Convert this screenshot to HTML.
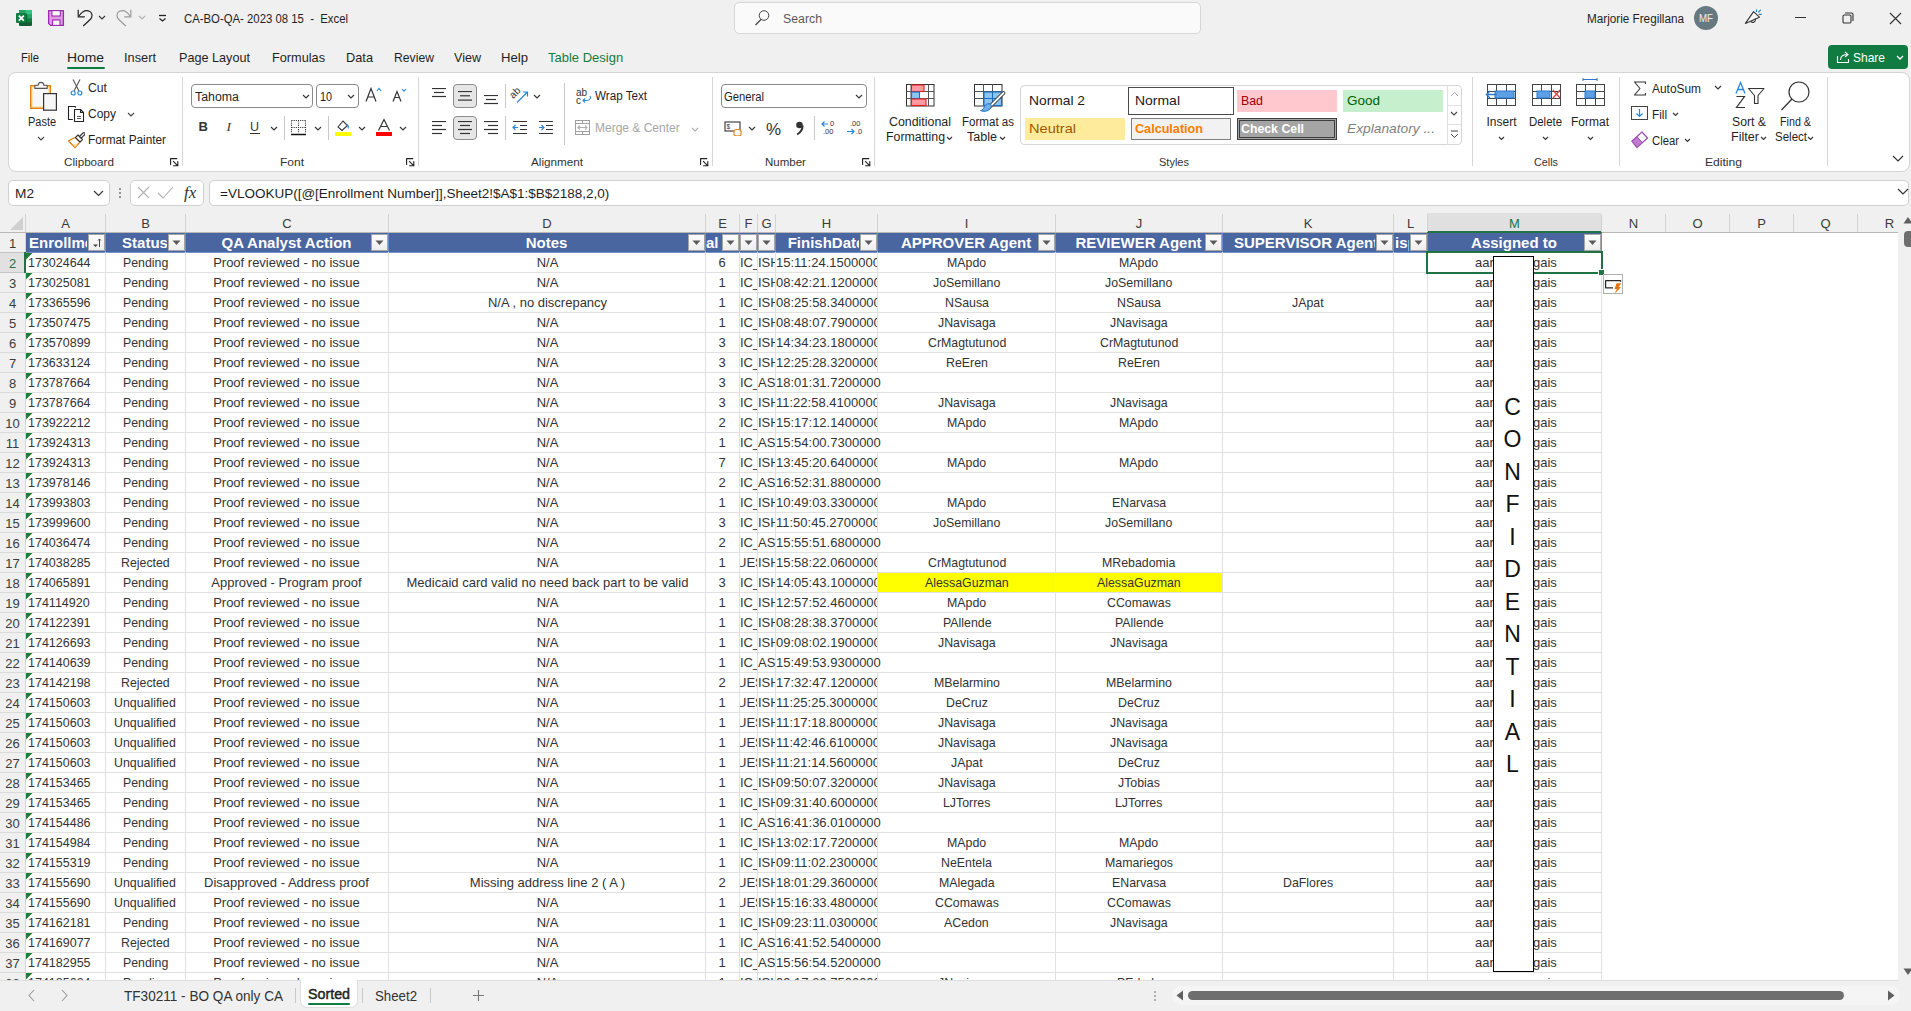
<!DOCTYPE html><html><head><meta charset="utf-8"><style>
html,body{margin:0;padding:0}body{width:1911px;height:1011px;overflow:hidden;position:relative;background:#f0f0f0;font-family:"Liberation Sans",sans-serif}
.t{position:absolute;white-space:pre}.b{position:absolute}
</style></head><body>
<svg class="b" style="left:15px;top:9px;" width="19" height="18" viewBox="0 0 19 18" fill="none"><rect x="4" y="1" width="13" height="16" rx="1" fill="#185c37"/><rect x="4" y="1" width="13" height="12.5" rx="1" fill="#107c41"/><rect x="4" y="1" width="13" height="8.5" rx="1" fill="#21a366"/><rect x="10.5" y="1" width="6.5" height="4.3" rx="0.8" fill="#33c481"/><rect x="1" y="4.1" width="10.6" height="9.8" rx="1" fill="#107c41"/><path d="M11.6 5v9.3H4" stroke="#0b5a2e" stroke-width="0.8" fill="none"/><path d="M3.8 6.6L8.8 11.6M8.8 6.6L3.8 11.6" stroke="#fff" stroke-width="1.7"/></svg>
<svg class="b" style="left:47px;top:9px;" width="18" height="18" viewBox="0 0 18 18" fill="none"><path d="M1.6 1.6H16.4V16.4H3.6L1.6 14.4Z" fill="#dc9de3" stroke="#9c27b0" stroke-width="1.3" stroke-linejoin="round"/><rect x="4.9" y="1.6" width="8.4" height="5.4" fill="#fafafa" stroke="#9c27b0" stroke-width="1.1"/><rect x="5.6" y="11" width="7.4" height="5.4" fill="#fafafa" stroke="#9c27b0" stroke-width="1.1"/></svg>
<svg class="b" style="left:76px;top:9px;" width="18" height="18" viewBox="0 0 18 18" fill="none"><path d="M2.2 0.8V7.9H8.8" stroke="#222" stroke-width="1.2" fill="none"/><path d="M3 7C6 2.5 10 0.8 13.5 2.2 16.6 3.6 16.8 8 14.2 10.5L7.2 17" stroke="#222" stroke-width="1.2" fill="none"/></svg>
<svg class="b" style="left:98px;top:15px;" width="8" height="6" viewBox="0 0 8 6" fill="none"><path d="M1 1 L4.0 4.0 L7 1" stroke="#333" stroke-width="1.1" fill="none"/></svg>
<svg class="b" style="left:116px;top:9px;" width="18" height="18" viewBox="0 0 18 18" fill="none"><path d="M14.8 0.8V7.9H8.2" stroke="#9a9a9a" stroke-width="1.2" fill="none"/><path d="M14 7C11 2.5 7 0.8 3.5 2.2 0.4 3.6 0.2 8 2.8 10.5L9.8 17" stroke="#9a9a9a" stroke-width="1.2" fill="none"/></svg>
<svg class="b" style="left:138px;top:15px;" width="8" height="6" viewBox="0 0 8 6" fill="none"><path d="M1 1 L4.0 4.0 L7 1" stroke="#b0b0b0" stroke-width="1.1" fill="none"/></svg>
<svg class="b" style="left:157px;top:13px;" width="11" height="10" viewBox="0 0 11 10" fill="none"><path d="M2 2.5h7" stroke="#222" stroke-width="1.3"/><path d="M2.5 5.5l3 2.5 3-2.5" stroke="#222" stroke-width="1.2" fill="none"/></svg>
<div class="t" style="left:184.00px;top:10.67px;font-size:12.5px;line-height:16px;color:#1f1f1f;transform:scaleX(0.9080);transform-origin:0 0;">CA-BO-QA- 2023 08 15  -  Excel</div>
<div class="b" style="left:734px;top:2px;width:467px;height:32px;background:#fafafa;border:1px solid #d6d6d6;border-radius:5px;box-sizing:border-box"></div>
<svg class="b" style="left:754px;top:10px;" width="17" height="17" viewBox="0 0 17 17" fill="none"><circle cx="10" cy="5.5" r="4.8" stroke="#444" stroke-width="1"/><path d="M7 9.5L1.5 15" stroke="#444" stroke-width="1.3"/></svg>
<div class="t" style="left:783.00px;top:10.67px;font-size:12.5px;line-height:16px;color:#5a5a5a;transform:scaleX(0.9846);transform-origin:0 0;">Search</div>
<div class="t" style="left:1587.00px;top:10.67px;font-size:12.5px;line-height:16px;color:#1f1f1f;transform:scaleX(0.9371);transform-origin:0 0;">Marjorie Fregillana</div>
<div class="b" style="left:1694px;top:6px;width:24px;height:24px;border-radius:50%;background:#667980"></div>
<div class="t" style="left:1699.00px;top:11.66px;font-size:10.5px;line-height:13px;color:#eeeeee;transform:scaleX(0.9237);transform-origin:0 0;">MF</div>
<svg class="b" style="left:1744px;top:9px;" width="20" height="19" viewBox="0 0 20 19" fill="none"><path d="M1.4 14.4L9.6 2.6 15.4 8.2z" stroke="#333" stroke-width="1.1" fill="#f7f7f7" stroke-linejoin="round"/><path d="M6.8 12.2a2.4 2.4 0 1 0 4.2-2.6" stroke="#333" stroke-width="1.1" fill="none"/><path d="M12.5 0.8v1.6M14.6 3.2l1.9-2.1M15.3 5.4h1.9" stroke="#1a7fd4" stroke-width="1.1" stroke-linecap="round"/></svg>
<div class="b" style="left:1795px;top:17px;width:11px;height:1px;background:#333"></div>
<svg class="b" style="left:1842px;top:12px;" width="12" height="12" viewBox="0 0 12 12" fill="none"><rect x="1" y="3" width="8" height="8" rx="1.2" stroke="#333" stroke-width="1.1" fill="none"/><path d="M3 1h6.5a1.5 1.5 0 0 1 1.5 1.5v6.5" stroke="#333" stroke-width="1.1" fill="none"/></svg>
<svg class="b" style="left:1889px;top:12px;" width="13" height="13" viewBox="0 0 13 13" fill="none"><path d="M1 1l11 11M12 1L1 12" stroke="#333" stroke-width="1.1"/></svg>
<div class="t" style="left:21.00px;top:49.50px;font-size:13px;line-height:16px;color:#1f1f1f;transform:scaleX(0.8591);transform-origin:0 0;">File</div>
<div class="t" style="left:67.00px;top:49.50px;font-size:13px;line-height:16px;color:#1f1f1f;transform:scaleX(1.0667);transform-origin:0 0;">Home</div>
<div class="t" style="left:124.00px;top:49.50px;font-size:13px;line-height:16px;color:#1f1f1f;transform:scaleX(0.9841);transform-origin:0 0;">Insert</div>
<div class="t" style="left:179.00px;top:49.50px;font-size:13px;line-height:16px;color:#1f1f1f;transform:scaleX(0.9722);transform-origin:0 0;">Page Layout</div>
<div class="t" style="left:272.00px;top:49.50px;font-size:13px;line-height:16px;color:#1f1f1f;transform:scaleX(0.9781);transform-origin:0 0;">Formulas</div>
<div class="t" style="left:346.00px;top:49.50px;font-size:13px;line-height:16px;color:#1f1f1f;transform:scaleX(0.9829);transform-origin:0 0;">Data</div>
<div class="t" style="left:394.00px;top:49.50px;font-size:13px;line-height:16px;color:#1f1f1f;transform:scaleX(0.9381);transform-origin:0 0;">Review</div>
<div class="t" style="left:454.00px;top:49.50px;font-size:13px;line-height:16px;color:#1f1f1f;transform:scaleX(0.9659);transform-origin:0 0;">View</div>
<div class="t" style="left:501.00px;top:49.50px;font-size:13px;line-height:16px;color:#1f1f1f;transform:scaleX(1.0093);transform-origin:0 0;">Help</div>
<div class="t" style="left:548.00px;top:49.50px;font-size:13px;line-height:16px;color:#107c41;">Table Design</div>
<div class="b" style="left:67px;top:67px;width:38px;height:2px;background:#107c41;border-radius:1px"></div>
<div class="b" style="left:1828px;top:45px;width:80px;height:24px;background:#107c41;border-radius:4px"></div>
<svg class="b" style="left:1836px;top:50px;" width="15" height="14" viewBox="0 0 15 14" fill="none"><path d="M1.5 6v6.5h11V9" stroke="#fff" stroke-width="1.1" fill="none"/><path d="M4.5 10c0-4 3-5.5 7-5.5M9 2l3 2.5-3 2.5" stroke="#fff" stroke-width="1.1" fill="none"/></svg>
<div class="t" style="left:1852.50px;top:48.82px;font-size:13.5px;line-height:17px;color:#ffffff;transform:scaleX(0.8877);transform-origin:0 0;">Share</div>
<svg class="b" style="left:1895.5px;top:55px;" width="8" height="6" viewBox="0 0 8 6" fill="none"><path d="M1 1 L4.0 4.0 L7 1" stroke="#fff" stroke-width="1.3" fill="none"/></svg>
<div class="b" style="left:8px;top:72px;width:1902px;height:100px;background:#ffffff;border:1px solid #d4d4d4;border-radius:8px;box-sizing:border-box"></div>
<svg class="b" style="left:29px;top:80px;" width="30" height="32" viewBox="0 0 30 32" fill="none"><rect x="1.7" y="5.7" width="19.6" height="22.6" fill="#fbe3a2" stroke="#e07a10" stroke-width="1.3"/><rect x="3.8" y="7.8" width="15.5" height="18.5" fill="#f7f7f7"/><path d="M5.8 8.4V5.2h3.4a2.8 2.8 0 0 1 5.6 0h3.4v3.2z" fill="#f7f7f7" stroke="#555" stroke-width="1.1" stroke-linejoin="round"/><rect x="14.6" y="13.6" width="12.8" height="16.6" fill="#f7f7f7" stroke="#333" stroke-width="1.2"/></svg>
<div class="t" style="left:27.50px;top:115.34px;font-size:12px;line-height:15px;color:#1f1f1f;transform:scaleX(0.9129);transform-origin:0 0;">Paste</div>
<svg class="b" style="left:37px;top:136px;" width="8" height="6" viewBox="0 0 8 6" fill="none"><path d="M1 1 L4.0 4.0 L7 1" stroke="#444" stroke-width="1.1" fill="none"/></svg>
<svg class="b" style="left:70px;top:79px;" width="13" height="18" viewBox="0 0 13 18" fill="none"><path d="M3 0.5l6 11.5M10 0.5L4 12" stroke="#555" stroke-width="1.1"/><circle cx="3.2" cy="14" r="2" stroke="#2b88d8" stroke-width="1.2"/><circle cx="9.8" cy="14" r="2" stroke="#2b88d8" stroke-width="1.2"/></svg>
<div class="t" style="left:88.00px;top:81.34px;font-size:12px;line-height:15px;color:#1f1f1f;transform:scaleX(1.0176);transform-origin:0 0;">Cut</div>
<svg class="b" style="left:67px;top:105px;" width="18" height="18" viewBox="0 0 18 18" fill="none"><path d="M5.8 14.5H1.5V1.5H8L9 2.5" stroke="#222" stroke-width="1.1" fill="none"/><path d="M7.5 4.5H13.5L16.5 7.5V16.5H7.5Z" stroke="#222" stroke-width="1.1" fill="#fff" stroke-linejoin="round"/><path d="M13.5 4.5V7.5H16.5" stroke="#222" stroke-width="1.1" fill="none"/><path d="M10 11.5h4M10 13.5h4" stroke="#444" stroke-width="0.9"/></svg>
<div class="t" style="left:88.00px;top:107.34px;font-size:12px;line-height:15px;color:#1f1f1f;">Copy</div>
<svg class="b" style="left:127px;top:112px;" width="8" height="6" viewBox="0 0 8 6" fill="none"><path d="M1 1 L4.0 4.0 L7 1" stroke="#444" stroke-width="1.1" fill="none"/></svg>
<svg class="b" style="left:67px;top:131px;" width="18" height="18" viewBox="0 0 18 18" fill="none"><path d="M1.5 10C4 8.5 6 7.5 8.5 6.5L13 11L8 16.5Z" fill="#fff" stroke="#e07a10" stroke-width="1.3" stroke-linejoin="round"/><path d="M5.5 13.2L10.8 13.8 8 16.3z" fill="#fbd38a"/><path d="M8.5 6.5l2.5-2.5 4.5 4.5-2.5 2.5z" fill="#fff" stroke="#333" stroke-width="1.1" stroke-linejoin="round"/><path d="M12.5 5.5L16 2a1.2 1.2 0 0 1 1.7 1.7L14.2 7.2z" fill="#fff" stroke="#333" stroke-width="1.1" stroke-linejoin="round"/></svg>
<div class="t" style="left:88.00px;top:133.34px;font-size:12px;line-height:15px;color:#1f1f1f;transform:scaleX(0.9831);transform-origin:0 0;">Format Painter</div>
<div class="t" style="left:63.50px;top:155.02px;font-size:11.5px;line-height:14px;color:#333333;transform:scaleX(1.0159);transform-origin:0 0;">Clipboard</div>
<svg class="b" style="left:170px;top:158px;" width="9" height="9" viewBox="0 0 9 9" fill="none"><path d="M0.6 6.5V0.6H6.8M3.4 3.4L7.6 7.6M7.8 3.5V7.8H3.5" stroke="#222" stroke-width="1.1" fill="none" stroke-linecap="round"/></svg>
<div class="b" style="left:182px;top:77px;width:1px;height:89px;background:#d6d6d6"></div>
<div class="b" style="left:191px;top:84px;width:122px;height:24px;background:#fff;border:1px solid #8a8a8a;border-radius:4px;box-sizing:border-box"></div>
<div class="t" style="left:195.00px;top:88.67px;font-size:12.5px;line-height:16px;color:#1f1f1f;transform:scaleX(0.9895);transform-origin:0 0;">Tahoma</div>
<svg class="b" style="left:302px;top:94px;" width="8" height="6" viewBox="0 0 8 6" fill="none"><path d="M1 1 L4.0 4.0 L7 1" stroke="#333" stroke-width="1.1" fill="none"/></svg>
<div class="b" style="left:316px;top:84px;width:43px;height:24px;background:#fff;border:1px solid #8a8a8a;border-radius:4px;box-sizing:border-box"></div>
<div class="t" style="left:319.50px;top:88.67px;font-size:12.5px;line-height:16px;color:#1f1f1f;transform:scaleX(0.8629);transform-origin:0 0;">10</div>
<svg class="b" style="left:347px;top:94px;" width="8" height="6" viewBox="0 0 8 6" fill="none"><path d="M1 1 L4.0 4.0 L7 1" stroke="#333" stroke-width="1.1" fill="none"/></svg>
<svg class="b" style="left:365px;top:87px;" width="18" height="16" viewBox="0 0 18 16" fill="none"><path d="M1 14.5L6 1.5l5 13M3 10h6" stroke="#333" stroke-width="1.2" fill="none"/><path d="M12 4l2-2.5 2 2.5" stroke="#2b88d8" stroke-width="1.1" fill="none"/></svg>
<svg class="b" style="left:392px;top:87px;" width="18" height="16" viewBox="0 0 18 16" fill="none"><path d="M1 14.5l4-10 4 10M2.7 10.5h4.6" stroke="#333" stroke-width="1.2" fill="none"/><path d="M10 2l2 2.2 2-2.2" stroke="#2b88d8" stroke-width="1.1" fill="none"/></svg>
<div class="t" style="left:198.60px;top:119.00px;font-size:13px;line-height:16px;color:#333;font-weight:bold;">B</div>
<div class="t" style="left:226.62px;top:118.32px;font-size:13.5px;line-height:17px;color:#333;font-style:italic;font-family:'Liberation Serif',serif;">I</div>
<div class="t" style="left:249.98px;top:118.67px;font-size:12.5px;line-height:16px;color:#333;">U</div>
<div class="b" style="left:250px;top:133px;width:10px;height:1px;background:#333"></div>
<svg class="b" style="left:270px;top:126px;" width="8" height="6" viewBox="0 0 8 6" fill="none"><path d="M1 1 L4.0 4.0 L7 1" stroke="#333" stroke-width="1.1" fill="none"/></svg>
<div class="b" style="left:284px;top:116px;width:1px;height:24px;background:#c8c8c8"></div>
<svg class="b" style="left:290px;top:119px;" width="17" height="17" viewBox="0 0 17 17" fill="none"><path d="M1.5 1.5h14M1.5 8.5h14M1.5 1.5v13M8.5 1.5v13M15.5 1.5v13" stroke="#333" stroke-width="1.1" stroke-dasharray="1.1 1.05" fill="none"/><path d="M1 15.5h15" stroke="#111" stroke-width="1.5"/></svg>
<svg class="b" style="left:314px;top:126px;" width="8" height="6" viewBox="0 0 8 6" fill="none"><path d="M1 1 L4.0 4.0 L7 1" stroke="#333" stroke-width="1.1" fill="none"/></svg>
<div class="b" style="left:328px;top:116px;width:1px;height:24px;background:#c8c8c8"></div>
<svg class="b" style="left:334px;top:118px;" width="18" height="19" viewBox="0 0 18 19" fill="none"><path d="M4 9l5-6 4.5 4.5-5.5 5z" stroke="#333" stroke-width="1.1" fill="none"/><path d="M12.5 6.5c1.5 0.5 2.5 2 1.5 4" stroke="#2b88d8" stroke-width="1.2" fill="none"/><rect x="1" y="14" width="16" height="4" fill="#ffff00"/></svg>
<svg class="b" style="left:358px;top:126px;" width="8" height="6" viewBox="0 0 8 6" fill="none"><path d="M1 1 L4.0 4.0 L7 1" stroke="#333" stroke-width="1.1" fill="none"/></svg>
<svg class="b" style="left:375px;top:118px;" width="18" height="19" viewBox="0 0 18 19" fill="none"><path d="M3.5 12.5L9 1.5l5.5 11M5.5 8.5h7" stroke="#333" stroke-width="1.2" fill="none"/><rect x="1" y="14" width="16" height="4" fill="#ff0000"/></svg>
<svg class="b" style="left:399px;top:126px;" width="8" height="6" viewBox="0 0 8 6" fill="none"><path d="M1 1 L4.0 4.0 L7 1" stroke="#333" stroke-width="1.1" fill="none"/></svg>
<div class="t" style="left:279.50px;top:155.02px;font-size:11.5px;line-height:14px;color:#333333;transform:scaleX(1.0435);transform-origin:0 0;">Font</div>
<svg class="b" style="left:406px;top:158px;" width="9" height="9" viewBox="0 0 9 9" fill="none"><path d="M0.6 6.5V0.6H6.8M3.4 3.4L7.6 7.6M7.8 3.5V7.8H3.5" stroke="#222" stroke-width="1.1" fill="none" stroke-linecap="round"/></svg>
<div class="b" style="left:418px;top:77px;width:1px;height:89px;background:#d6d6d6"></div>
<svg class="b" style="left:432px;top:88px;" width="16" height="14" viewBox="0 0 16 14" fill="none"><path d="M0 0.5h14" stroke="#333" stroke-width="1.2"/><path d="M2 4.5h10" stroke="#333" stroke-width="1.2"/><path d="M0 8.5h14" stroke="#333" stroke-width="1.2"/></svg>
<div class="b" style="left:453px;top:84px;width:24px;height:24px;background:#e6e6e6;border:1px solid #8d8d8d;border-radius:4px;box-sizing:border-box"></div>
<svg class="b" style="left:458px;top:91px;" width="16" height="14.899999999999999" viewBox="0 0 16 14.899999999999999" fill="none"><path d="M0 0.5h14" stroke="#333" stroke-width="1.2"/><path d="M2 4.8h10" stroke="#333" stroke-width="1.2"/><path d="M0 9.1h14" stroke="#333" stroke-width="1.2"/></svg>
<svg class="b" style="left:484px;top:95px;" width="16" height="14" viewBox="0 0 16 14" fill="none"><path d="M0 0.5h14" stroke="#333" stroke-width="1.2"/><path d="M2 4.5h10" stroke="#333" stroke-width="1.2"/><path d="M0 8.5h14" stroke="#333" stroke-width="1.2"/></svg>
<div class="b" style="left:505px;top:84px;width:1px;height:24px;background:#c8c8c8"></div>
<svg class="b" style="left:510px;top:85px;" width="20" height="20" viewBox="0 0 20 20" fill="none"><text x="0" y="12" font-size="10" fill="#333" font-family="Liberation Sans" transform="rotate(-45 4 9)">ab</text><path d="M7 17.5L17.5 7M13 7h4.5v4.5" stroke="#2b88d8" stroke-width="1.2" fill="none"/></svg>
<svg class="b" style="left:533px;top:94px;" width="8" height="6" viewBox="0 0 8 6" fill="none"><path d="M1 1 L4.0 4.0 L7 1" stroke="#333" stroke-width="1.1" fill="none"/></svg>
<svg class="b" style="left:432px;top:121px;" width="16" height="18" viewBox="0 0 16 18" fill="none"><path d="M0 0.5h14" stroke="#333" stroke-width="1.2"/><path d="M0 4.5h10" stroke="#333" stroke-width="1.2"/><path d="M0 8.5h14" stroke="#333" stroke-width="1.2"/><path d="M0 12.5h10" stroke="#333" stroke-width="1.2"/></svg>
<div class="b" style="left:453px;top:116px;width:24px;height:24px;background:#e6e6e6;border:1px solid #8d8d8d;border-radius:4px;box-sizing:border-box"></div>
<svg class="b" style="left:458px;top:121px;" width="16" height="18" viewBox="0 0 16 18" fill="none"><path d="M0 0.5h14" stroke="#333" stroke-width="1.2"/><path d="M2 4.5h10" stroke="#333" stroke-width="1.2"/><path d="M0 8.5h14" stroke="#333" stroke-width="1.2"/><path d="M2 12.5h10" stroke="#333" stroke-width="1.2"/></svg>
<svg class="b" style="left:484px;top:121px;" width="16" height="18" viewBox="0 0 16 18" fill="none"><path d="M0 0.5h14" stroke="#333" stroke-width="1.2"/><path d="M4 4.5h10" stroke="#333" stroke-width="1.2"/><path d="M0 8.5h14" stroke="#333" stroke-width="1.2"/><path d="M4 12.5h10" stroke="#333" stroke-width="1.2"/></svg>
<div class="b" style="left:505px;top:116px;width:1px;height:24px;background:#c8c8c8"></div>
<svg class="b" style="left:512px;top:120px;" width="16" height="16" viewBox="0 0 16 16" fill="none"><path d="M1 1.5h14M8 5.5h7M8 9.5h7M1 13.5h14" stroke="#333" stroke-width="1.1"/><path d="M6 7.5H1M3.5 5L1 7.5 3.5 10" stroke="#2b88d8" stroke-width="1.2" fill="none"/></svg>
<svg class="b" style="left:538px;top:120px;" width="16" height="16" viewBox="0 0 16 16" fill="none"><path d="M1 1.5h14M8 5.5h7M8 9.5h7M1 13.5h14" stroke="#333" stroke-width="1.1"/><path d="M1 7.5h5M3.5 5L6 7.5 3.5 10" stroke="#2b88d8" stroke-width="1.2" fill="none"/></svg>
<div class="b" style="left:564px;top:83px;width:1px;height:62px;background:#c8c8c8"></div>
<svg class="b" style="left:576px;top:87px;" width="17" height="17" viewBox="0 0 17 17" fill="none"><text x="0" y="9" font-size="10" fill="#333" font-family="Liberation Sans">ab</text><text x="0" y="17" font-size="10" fill="#333" font-family="Liberation Sans">c</text><path d="M14 9c1.5 2-0.5 4.5-3 4.5H7M9 11.5L7 13.5l2 2" stroke="#2b88d8" stroke-width="1.1" fill="none"/></svg>
<div class="t" style="left:595.00px;top:89.34px;font-size:12px;line-height:15px;color:#1f1f1f;transform:scaleX(0.9708);transform-origin:0 0;">Wrap Text</div>
<svg class="b" style="left:575px;top:120px;" width="16" height="16" viewBox="0 0 16 16" fill="none"><rect x="0.5" y="0.5" width="14" height="14" stroke="#a0a0a0" fill="none"/><path d="M0.5 3.5h14M0.5 11.5h14M7.5 0.5v3M7.5 11.5v3" stroke="#a0a0a0" stroke-width="1"/><path d="M3 7.5h9M5 5.5l-2 2 2 2M10 5.5l2 2-2 2" stroke="#b0b0b0" stroke-width="1.1" fill="none"/></svg>
<div class="t" style="left:595.00px;top:121.34px;font-size:12px;line-height:15px;color:#a6a6a6;">Merge &amp; Center</div>
<svg class="b" style="left:691px;top:127px;" width="8" height="6" viewBox="0 0 8 6" fill="none"><path d="M1 1 L4.0 4.0 L7 1" stroke="#b0b0b0" stroke-width="1.1" fill="none"/></svg>
<div class="t" style="left:531.00px;top:155.02px;font-size:11.5px;line-height:14px;color:#333333;transform:scaleX(1.0171);transform-origin:0 0;">Alignment</div>
<svg class="b" style="left:700px;top:158px;" width="9" height="9" viewBox="0 0 9 9" fill="none"><path d="M0.6 6.5V0.6H6.8M3.4 3.4L7.6 7.6M7.8 3.5V7.8H3.5" stroke="#222" stroke-width="1.1" fill="none" stroke-linecap="round"/></svg>
<div class="b" style="left:712px;top:77px;width:1px;height:89px;background:#d6d6d6"></div>
<div class="b" style="left:721px;top:84px;width:146px;height:24px;background:#fff;border:1px solid #8a8a8a;border-radius:4px;box-sizing:border-box"></div>
<div class="t" style="left:724.00px;top:88.67px;font-size:12.5px;line-height:16px;color:#1f1f1f;transform:scaleX(0.8995);transform-origin:0 0;">General</div>
<svg class="b" style="left:855px;top:94px;" width="8" height="6" viewBox="0 0 8 6" fill="none"><path d="M1 1 L4.0 4.0 L7 1" stroke="#333" stroke-width="1.1" fill="none"/></svg>
<svg class="b" style="left:724px;top:121px;" width="19" height="15" viewBox="0 0 19 15" fill="none"><rect x="1" y="1" width="15" height="9" stroke="#333" stroke-width="1.1" fill="#fff"/><text x="2.5" y="8" font-size="6.5" fill="#333" font-family="Liberation Sans">$</text><ellipse cx="13.5" cy="10" rx="3.5" ry="1.5" fill="#fff" stroke="#e07a10" stroke-width="1.1"/><path d="M10 10v3.5c0 2 7 2 7 0V10" stroke="#e07a10" stroke-width="1.1" fill="#fff"/></svg>
<svg class="b" style="left:748px;top:126px;" width="8" height="6" viewBox="0 0 8 6" fill="none"><path d="M1 1 L4.0 4.0 L7 1" stroke="#333" stroke-width="1.1" fill="none"/></svg>
<div class="t" style="left:765.95px;top:118.61px;font-size:17px;line-height:21px;color:#333;">%</div>
<svg class="b" style="left:794px;top:120px;" width="11" height="17" viewBox="0 0 11 17" fill="none"><circle cx="5.5" cy="5" r="3.3" fill="#333"/><path d="M8.6 5.5c0 4-2 7-5.5 9" stroke="#333" stroke-width="2" fill="none"/></svg>
<div class="b" style="left:814px;top:116px;width:1px;height:24px;background:#c8c8c8"></div>
<svg class="b" style="left:821px;top:119px;" width="17" height="16" viewBox="0 0 17 16" fill="none"><text x="9" y="7" font-size="7.5" fill="#333" font-family="Liberation Sans">0</text><text x="2" y="15" font-size="7.5" fill="#333" font-family="Liberation Sans">.00</text><path d="M7 5H1M3.5 2.5L1 5l2.5 2.5" stroke="#2b88d8" stroke-width="1.2" fill="none"/></svg>
<svg class="b" style="left:846px;top:119px;" width="17" height="16" viewBox="0 0 17 16" fill="none"><text x="4" y="7" font-size="7.5" fill="#333" font-family="Liberation Sans">.00</text><text x="10" y="15" font-size="7.5" fill="#333" font-family="Liberation Sans">.0</text><path d="M1 12.5h7M5.5 10L8 12.5 5.5 15" stroke="#2b88d8" stroke-width="1.2" fill="none"/></svg>
<div class="t" style="left:765.00px;top:155.02px;font-size:11.5px;line-height:14px;color:#333333;">Number</div>
<svg class="b" style="left:862px;top:158px;" width="9" height="9" viewBox="0 0 9 9" fill="none"><path d="M0.6 6.5V0.6H6.8M3.4 3.4L7.6 7.6M7.8 3.5V7.8H3.5" stroke="#222" stroke-width="1.1" fill="none" stroke-linecap="round"/></svg>
<div class="b" style="left:874px;top:77px;width:1px;height:89px;background:#d6d6d6"></div>
<svg class="b" style="left:906px;top:84px;" width="29" height="23" viewBox="0 0 29 23" fill="none"><rect x="0.5" y="0.5" width="27.5" height="21.5" fill="#fff" stroke="#333"/><path d="M0.5 7.5h27.5M0.5 14.5h27.5M22.5 0.5v21.5M5 0.5v21.5" stroke="#555" stroke-width="1"/><rect x="5.5" y="1" width="12.5" height="6.5" fill="#ff9aa2" stroke="#e02020" stroke-width="1.1"/><rect x="5.5" y="8" width="8" height="6.5" fill="#8cc4f0" stroke="#1a6fc4" stroke-width="1.1"/><rect x="5.5" y="15" width="14.5" height="6.5" fill="#ff9aa2" stroke="#e02020" stroke-width="1.1"/></svg>
<div class="t" style="left:889.00px;top:115.34px;font-size:12px;line-height:15px;color:#1f1f1f;transform:scaleX(1.0325);transform-origin:0 0;">Conditional</div>
<div class="t" style="left:885.50px;top:130.34px;font-size:12px;line-height:15px;color:#1f1f1f;transform:scaleX(1.0289);transform-origin:0 0;">Formatting</div>
<svg class="b" style="left:946px;top:136px;" width="7" height="5" viewBox="0 0 7 5" fill="none"><path d="M1 1 L3.5 3.5 L6 1" stroke="#333" stroke-width="1.1" fill="none"/></svg>
<svg class="b" style="left:974px;top:84px;" width="32" height="29" viewBox="0 0 32 29" fill="none"><rect x="0.5" y="0.5" width="27.5" height="21.5" fill="#fff" stroke="#333"/><path d="M0.5 7.5h27.5M0.5 14.5h27.5M9.5 0.5v21.5M18.5 0.5v21.5" stroke="#555" stroke-width="1"/><rect x="10" y="8" width="17.5" height="13.5" fill="#8cc4f0" stroke="#1a6fc4" stroke-width="1.1"/><path d="M10 14.5h17.5M18.5 8v13.5" stroke="#1a6fc4" stroke-width="1"/><path d="M29.5 9L16 22.5" stroke="#333" stroke-width="3.6" stroke-linecap="round"/><path d="M29.5 9L16 22.5" stroke="#fff" stroke-width="1.8" stroke-linecap="round"/><path d="M17 20.5c-3-2-6 0-7 3-0.5 1.5-2 3-3.5 3 3 1.5 7 1 9.5-1.5 1.5-1.5 1.5-3 1-4.5z" fill="#6fb0ea" stroke="#1a6fc4" stroke-width="1"/></svg>
<div class="t" style="left:962.00px;top:115.34px;font-size:12px;line-height:15px;color:#1f1f1f;transform:scaleX(0.9630);transform-origin:0 0;">Format as</div>
<div class="t" style="left:967.00px;top:130.34px;font-size:12px;line-height:15px;color:#1f1f1f;transform:scaleX(1.0458);transform-origin:0 0;">Table</div>
<svg class="b" style="left:999px;top:136px;" width="7" height="5" viewBox="0 0 7 5" fill="none"><path d="M1 1 L3.5 3.5 L6 1" stroke="#333" stroke-width="1.1" fill="none"/></svg>
<div class="b" style="left:1020px;top:85px;width:442px;height:60px;background:#fff;border:1px solid #d6d6d6;border-radius:4px;box-sizing:border-box"></div>
<div class="t" style="left:1029.00px;top:92.50px;font-size:13px;line-height:16px;color:#1a1a1a;transform:scaleX(1.0616);transform-origin:0 0;">Normal 2</div>
<div class="b" style="left:1128px;top:87px;width:106px;height:28px;background:#fff;border:1px solid #4a4a4a;box-sizing:border-box"></div>
<div class="t" style="left:1135.00px;top:92.50px;font-size:13px;line-height:16px;color:#1a1a1a;transform:scaleX(1.0738);transform-origin:0 0;">Normal</div>
<div class="b" style="left:1237px;top:90px;width:100px;height:22px;background:#ffc7ce"></div>
<div class="t" style="left:1241.00px;top:92.50px;font-size:13px;line-height:16px;color:#9c0006;transform:scaleX(0.9507);transform-origin:0 0;">Bad</div>
<div class="b" style="left:1343px;top:90px;width:100px;height:22px;background:#c6efce"></div>
<div class="t" style="left:1347.00px;top:92.50px;font-size:13px;line-height:16px;color:#006100;transform:scaleX(1.0373);transform-origin:0 0;">Good</div>
<div class="b" style="left:1025px;top:118px;width:100px;height:22px;background:#ffeb9c"></div>
<div class="t" style="left:1029.00px;top:120.50px;font-size:13px;line-height:16px;color:#9c5700;transform:scaleX(1.1211);transform-origin:0 0;">Neutral</div>
<div class="b" style="left:1131px;top:118px;width:100px;height:22px;background:#f2f2f2;border:1px solid #7f7f7f;box-sizing:border-box"></div>
<div class="t" style="left:1135.00px;top:120.50px;font-size:13px;line-height:16px;color:#fa7d00;font-weight:bold;transform:scaleX(0.9706);transform-origin:0 0;">Calculation</div>
<div class="b" style="left:1237px;top:118px;width:100px;height:22px;background:#a5a5a5;border:3px double #3f3f3f;box-sizing:border-box"></div>
<div class="t" style="left:1241.00px;top:120.50px;font-size:13px;line-height:16px;color:#ffffff;font-weight:bold;transform:scaleX(0.9476);transform-origin:0 0;">Check Cell</div>
<div class="t" style="left:1347.00px;top:120.50px;font-size:13px;line-height:16px;color:#7f7f7f;font-style:italic;transform:scaleX(1.0588);transform-origin:0 0;">Explanatory ...</div>
<div class="b" style="left:1447px;top:85px;width:1px;height:60px;background:#e0e0e0"></div>
<div class="b" style="left:1448px;top:105px;width:13px;height:1px;background:#e0e0e0"></div>
<div class="b" style="left:1448px;top:124px;width:13px;height:1px;background:#e0e0e0"></div>
<svg class="b" style="left:1450px;top:91px;" width="9" height="6" viewBox="0 0 9 6" fill="none"><path d="M1 5l3.5-3.5L8 5" stroke="#aaa" stroke-width="1" fill="none"/></svg>
<svg class="b" style="left:1450px;top:111px;" width="8" height="6" viewBox="0 0 8 6" fill="none"><path d="M1 1 L4.0 4.0 L7 1" stroke="#444" stroke-width="1.1" fill="none"/></svg>
<svg class="b" style="left:1450px;top:130px;" width="9" height="9" viewBox="0 0 9 9" fill="none"><path d="M1 1h7" stroke="#444" stroke-width="1"/><path d="M1 4l3.5 3.5L8 4" stroke="#444" stroke-width="1" fill="none"/></svg>
<div class="t" style="left:1158.50px;top:155.02px;font-size:11.5px;line-height:14px;color:#333333;transform:scaleX(0.9581);transform-origin:0 0;">Styles</div>
<div class="b" style="left:1472px;top:77px;width:1px;height:89px;background:#d6d6d6"></div>
<svg class="b" style="left:1485px;top:83px;" width="34" height="24" viewBox="0 0 34 24" fill="none"><rect x="2.5" y="1.5" width="28" height="21" stroke="#444" fill="none"/><path d="M11.5 1v22M21.5 1v22M2 8.5h29M2 15.5h29" stroke="#444"/><rect x="10" y="8" width="19" height="7" fill="#5ea0e6" stroke="#2b78c8"/><path d="M12 11.5H1.5M5 8L1.5 11.5 5 15" stroke="#2b78c8" stroke-width="1.4" fill="none"/></svg>
<div class="t" style="left:1486.50px;top:115.34px;font-size:12px;line-height:15px;color:#1f1f1f;">Insert</div>
<svg class="b" style="left:1498px;top:136px;" width="7" height="5" viewBox="0 0 7 5" fill="none"><path d="M1 1 L3.5 3.5 L6 1" stroke="#333" stroke-width="1.1" fill="none"/></svg>
<svg class="b" style="left:1531px;top:83px;" width="34" height="24" viewBox="0 0 34 24" fill="none"><rect x="1.5" y="1.5" width="28" height="21" stroke="#444" fill="none"/><path d="M10.5 1v22M20.5 1v22M1 8.5h29M1 15.5h29" stroke="#444"/><rect x="6" y="8" width="13" height="7" fill="#5ea0e6" stroke="#2b78c8"/><path d="M22 7l7 8M29 7l-7 8" stroke="#e04040" stroke-width="1.3"/></svg>
<div class="t" style="left:1529.00px;top:115.34px;font-size:12px;line-height:15px;color:#1f1f1f;transform:scaleX(0.9514);transform-origin:0 0;">Delete</div>
<svg class="b" style="left:1542px;top:136px;" width="7" height="5" viewBox="0 0 7 5" fill="none"><path d="M1 1 L3.5 3.5 L6 1" stroke="#333" stroke-width="1.1" fill="none"/></svg>
<svg class="b" style="left:1575px;top:78px;" width="31" height="30" viewBox="0 0 31 30" fill="none"><path d="M8 1.5h14M8 0v3M22 0v3" stroke="#2b78c8" stroke-width="1"/><rect x="1.5" y="6.5" width="28" height="21" stroke="#444" fill="none"/><path d="M10.5 6v22M20.5 6v22M1 13.5h29M1 20.5h29" stroke="#444"/><rect x="10" y="13" width="10" height="7" fill="#5ea0e6" stroke="#2b78c8"/></svg>
<div class="t" style="left:1571.00px;top:115.34px;font-size:12px;line-height:15px;color:#1f1f1f;">Format</div>
<svg class="b" style="left:1587px;top:136px;" width="7" height="5" viewBox="0 0 7 5" fill="none"><path d="M1 1 L3.5 3.5 L6 1" stroke="#333" stroke-width="1.1" fill="none"/></svg>
<div class="t" style="left:1534.00px;top:155.02px;font-size:11.5px;line-height:14px;color:#333333;transform:scaleX(0.9383);transform-origin:0 0;">Cells</div>
<div class="b" style="left:1619px;top:77px;width:1px;height:89px;background:#d6d6d6"></div>
<svg class="b" style="left:1633px;top:81px;" width="14" height="15" viewBox="0 0 14 15" fill="none"><path d="M12.5 3V1H1.5l5.5 6.5L1.5 14h11v-2" stroke="#333" stroke-width="1.1" fill="none" stroke-linejoin="round"/></svg>
<div class="t" style="left:1652.00px;top:82.34px;font-size:12px;line-height:15px;color:#1f1f1f;transform:scaleX(0.9930);transform-origin:0 0;">AutoSum</div>
<svg class="b" style="left:1714px;top:85px;" width="8" height="6" viewBox="0 0 8 6" fill="none"><path d="M1 1 L4.0 4.0 L7 1" stroke="#333" stroke-width="1.1" fill="none"/></svg>
<svg class="b" style="left:1631px;top:106px;" width="18" height="15" viewBox="0 0 18 15" fill="none"><rect x="0.5" y="0.5" width="16" height="13" stroke="#444" fill="#fff"/><path d="M8.5 3v7M5.5 7.5l3 3 3-3" stroke="#2b88d8" stroke-width="1.2" fill="none"/></svg>
<div class="t" style="left:1652.00px;top:108.34px;font-size:12px;line-height:15px;color:#1f1f1f;transform:scaleX(0.9776);transform-origin:0 0;">Fill</div>
<svg class="b" style="left:1672px;top:112px;" width="7" height="5" viewBox="0 0 7 5" fill="none"><path d="M1 1 L3.5 3.5 L6 1" stroke="#333" stroke-width="1.1" fill="none"/></svg>
<svg class="b" style="left:1631px;top:131px;" width="18" height="18" viewBox="0 0 18 18" fill="none"><path d="M1 10L6 5.5 11 11.5 6 16z" fill="#c27bd0"/><path d="M11 1L16.5 7 6 16.5 0.8 10.2z" stroke="#9b4fb0" stroke-width="1.2" fill="none" stroke-linejoin="round"/><path d="M6 5.5L11 11.5" stroke="#9b4fb0" stroke-width="1"/></svg>
<div class="t" style="left:1652.00px;top:134.34px;font-size:12px;line-height:15px;color:#1f1f1f;transform:scaleX(0.9412);transform-origin:0 0;">Clear</div>
<svg class="b" style="left:1684px;top:138px;" width="7" height="5" viewBox="0 0 7 5" fill="none"><path d="M1 1 L3.5 3.5 L6 1" stroke="#333" stroke-width="1.1" fill="none"/></svg>
<svg class="b" style="left:1733px;top:81px;" width="33" height="28" viewBox="0 0 33 28" fill="none"><path d="M3 12.5L7.5 1.5 12 12.5M4.6 8.5h5.8" stroke="#2b88d8" stroke-width="1.3" fill="none"/><path d="M3.5 15.5h8l-8 11h8.5" stroke="#333" stroke-width="1.2" fill="none"/><path d="M15.5 7.5h15.5l-6 7v8h-3.5v-8z" stroke="#333" stroke-width="1.1" fill="none" stroke-linejoin="round"/></svg>
<div class="t" style="left:1732.00px;top:115.34px;font-size:12px;line-height:15px;color:#1f1f1f;transform:scaleX(1.0202);transform-origin:0 0;">Sort &amp;</div>
<div class="t" style="left:1731.00px;top:130.34px;font-size:12px;line-height:15px;color:#1f1f1f;transform:scaleX(1.0498);transform-origin:0 0;">Filter</div>
<svg class="b" style="left:1760px;top:136px;" width="7" height="5" viewBox="0 0 7 5" fill="none"><path d="M1 1 L3.5 3.5 L6 1" stroke="#333" stroke-width="1.1" fill="none"/></svg>
<svg class="b" style="left:1780px;top:80px;" width="32" height="32" viewBox="0 0 32 32" fill="none"><circle cx="19" cy="12" r="10" stroke="#333" stroke-width="1.2" fill="none"/><path d="M12 19L1.5 30" stroke="#333" stroke-width="1.3"/></svg>
<div class="t" style="left:1780.00px;top:115.34px;font-size:12px;line-height:15px;color:#1f1f1f;transform:scaleX(0.8941);transform-origin:0 0;">Find &amp;</div>
<div class="t" style="left:1775.00px;top:130.34px;font-size:12px;line-height:15px;color:#1f1f1f;transform:scaleX(0.9597);transform-origin:0 0;">Select</div>
<svg class="b" style="left:1807px;top:136px;" width="7" height="5" viewBox="0 0 7 5" fill="none"><path d="M1 1 L3.5 3.5 L6 1" stroke="#333" stroke-width="1.1" fill="none"/></svg>
<div class="t" style="left:1704.50px;top:155.02px;font-size:11.5px;line-height:14px;color:#333333;transform:scaleX(1.0524);transform-origin:0 0;">Editing</div>
<div class="b" style="left:1827px;top:77px;width:1px;height:89px;background:#d6d6d6"></div>
<svg class="b" style="left:1892px;top:155px;" width="12" height="8" viewBox="0 0 12 8" fill="none"><path d="M1 1 L6.0 6.0 L11 1" stroke="#333" stroke-width="1.2" fill="none"/></svg>
<div class="b" style="left:8px;top:180px;width:102px;height:26px;background:#fff;border:1px solid #d0d0d0;border-radius:5px;box-sizing:border-box"></div>
<div class="t" style="left:15.00px;top:185.50px;font-size:13px;line-height:16px;color:#1f1f1f;transform:scaleX(1.0519);transform-origin:0 0;">M2</div>
<svg class="b" style="left:93px;top:190px;" width="11" height="7" viewBox="0 0 11 7" fill="none"><path d="M1 1 L5.5 5.5 L10 1" stroke="#333" stroke-width="1.1" fill="none"/></svg>
<div class="b" style="left:119px;top:188px;width:2px;height:2px;background:#777;border-radius:1px"></div>
<div class="b" style="left:119px;top:192px;width:2px;height:2px;background:#777;border-radius:1px"></div>
<div class="b" style="left:119px;top:196px;width:2px;height:2px;background:#777;border-radius:1px"></div>
<div class="b" style="left:130px;top:180px;width:74px;height:26px;background:#fff;border:1px solid #d0d0d0;border-radius:5px;box-sizing:border-box"></div>
<svg class="b" style="left:137px;top:186px;" width="13" height="13" viewBox="0 0 13 13" fill="none"><path d="M1 1l11 11M12 1L1 12" stroke="#b0b0b0" stroke-width="1.1"/></svg>
<svg class="b" style="left:157px;top:186px;" width="17" height="13" viewBox="0 0 17 13" fill="none"><path d="M1 7l5 5L16 1" stroke="#b0b0b0" stroke-width="1.1" fill="none"/></svg>
<div class="t" style="left:184.00px;top:182.11px;font-size:17px;line-height:21px;color:#333;font-style:italic;font-family:'Liberation Serif',serif;">fx</div>
<div class="b" style="left:209px;top:180px;width:1700px;height:26px;background:#fff;border:1px solid #d0d0d0;border-radius:5px;box-sizing:border-box"></div>
<div class="t" style="left:220.00px;top:184.82px;font-size:13.5px;line-height:17px;color:#1f1f1f;">=VLOOKUP([@[Enrollment Number]],Sheet2!$A$1:$B$2188,2,0)</div>
<svg class="b" style="left:1897px;top:188px;" width="12" height="8" viewBox="0 0 12 8" fill="none"><path d="M1 1 L6.0 6.0 L11 1" stroke="#333" stroke-width="1.2" fill="none"/></svg>
<div class="b" style="left:25px;top:233px;width:1873px;height:747px;background:#fff"></div>
<div class="b" style="left:0px;top:213px;width:1898px;height:19px;background:#f0f0f0"></div>
<div class="b" style="left:0px;top:233px;width:25px;height:747px;background:#f0f0f0"></div>
<div class="b" style="left:1427px;top:213px;width:174px;height:19px;background:#e0e0e0"></div>
<div class="b" style="left:1427px;top:231px;width:175px;height:2px;background:#217346"></div>
<div class="b" style="left:25px;top:214px;width:1px;height:18px;background:#d4d4d4"></div>
<div class="b" style="left:105px;top:214px;width:1px;height:18px;background:#d4d4d4"></div>
<div class="b" style="left:185px;top:214px;width:1px;height:18px;background:#d4d4d4"></div>
<div class="b" style="left:388px;top:214px;width:1px;height:18px;background:#d4d4d4"></div>
<div class="b" style="left:705px;top:214px;width:1px;height:18px;background:#d4d4d4"></div>
<div class="b" style="left:739px;top:214px;width:1px;height:18px;background:#d4d4d4"></div>
<div class="b" style="left:757px;top:214px;width:1px;height:18px;background:#d4d4d4"></div>
<div class="b" style="left:775px;top:214px;width:1px;height:18px;background:#d4d4d4"></div>
<div class="b" style="left:877px;top:214px;width:1px;height:18px;background:#d4d4d4"></div>
<div class="b" style="left:1055px;top:214px;width:1px;height:18px;background:#d4d4d4"></div>
<div class="b" style="left:1222px;top:214px;width:1px;height:18px;background:#d4d4d4"></div>
<div class="b" style="left:1393px;top:214px;width:1px;height:18px;background:#d4d4d4"></div>
<div class="b" style="left:1427px;top:214px;width:1px;height:18px;background:#d4d4d4"></div>
<div class="b" style="left:1601px;top:214px;width:1px;height:18px;background:#d4d4d4"></div>
<div class="b" style="left:1665px;top:214px;width:1px;height:18px;background:#d4d4d4"></div>
<div class="b" style="left:1729px;top:214px;width:1px;height:18px;background:#d4d4d4"></div>
<div class="b" style="left:1793px;top:214px;width:1px;height:18px;background:#d4d4d4"></div>
<div class="b" style="left:1857px;top:214px;width:1px;height:18px;background:#d4d4d4"></div>
<div class="b" style="left:0px;top:232px;width:1427px;height:1px;background:#b8b8b8"></div>
<div class="b" style="left:1602px;top:232px;width:296px;height:1px;background:#b8b8b8"></div>
<div class="t" style="left:61.16px;top:215.50px;font-size:13px;line-height:16px;color:#3b3b3b;">A</div>
<div class="t" style="left:141.16px;top:215.50px;font-size:13px;line-height:16px;color:#3b3b3b;">B</div>
<div class="t" style="left:282.30px;top:215.50px;font-size:13px;line-height:16px;color:#3b3b3b;">C</div>
<div class="t" style="left:542.30px;top:215.50px;font-size:13px;line-height:16px;color:#3b3b3b;">D</div>
<div class="t" style="left:718.16px;top:215.50px;font-size:13px;line-height:16px;color:#3b3b3b;">E</div>
<div class="t" style="left:744.53px;top:215.50px;font-size:13px;line-height:16px;color:#3b3b3b;">F</div>
<div class="t" style="left:761.45px;top:215.50px;font-size:13px;line-height:16px;color:#3b3b3b;">G</div>
<div class="t" style="left:821.80px;top:215.50px;font-size:13px;line-height:16px;color:#3b3b3b;">H</div>
<div class="t" style="left:964.70px;top:215.50px;font-size:13px;line-height:16px;color:#3b3b3b;">I</div>
<div class="t" style="left:1135.75px;top:215.50px;font-size:13px;line-height:16px;color:#3b3b3b;">J</div>
<div class="t" style="left:1303.66px;top:215.50px;font-size:13px;line-height:16px;color:#3b3b3b;">K</div>
<div class="t" style="left:1406.88px;top:215.50px;font-size:13px;line-height:16px;color:#3b3b3b;">L</div>
<div class="t" style="left:1509.09px;top:215.50px;font-size:13px;line-height:16px;color:#217346;">M</div>
<div class="t" style="left:1628.80px;top:215.50px;font-size:13px;line-height:16px;color:#3b3b3b;">N</div>
<div class="t" style="left:1692.45px;top:215.50px;font-size:13px;line-height:16px;color:#3b3b3b;">O</div>
<div class="t" style="left:1757.16px;top:215.50px;font-size:13px;line-height:16px;color:#3b3b3b;">P</div>
<div class="t" style="left:1820.45px;top:215.50px;font-size:13px;line-height:16px;color:#3b3b3b;">Q</div>
<div class="t" style="left:1884.80px;top:215.50px;font-size:13px;line-height:16px;color:#3b3b3b;">R</div>
<svg class="b" style="left:10px;top:217px;" width="14" height="14" viewBox="0 0 14 14" fill="none"><path d="M13 0 L13 13 L0 13 Z" fill="#d0d0d0"/></svg>
<div class="b" style="left:25px;top:233px;width:1px;height:747px;background:#d4d4d4"></div>
<div class="t" style="left:8.88px;top:235.50px;font-size:13px;line-height:16px;color:#3b3b3b;">1</div>
<div class="b" style="left:0px;top:233px;width:1898px;height:747px;overflow:hidden;">
<div class="b" style="left:26px;top:0px;width:1576px;height:20px;background:#4a66a1"></div>
<div class="b" style="left:26px;top:19px;width:1576px;height:1px;background:#7391cf"></div>
<div class="b" style="left:105px;top:0px;width:1px;height:20px;background:#6a8ad0"></div>
<div class="b" style="left:185px;top:0px;width:1px;height:20px;background:#6a8ad0"></div>
<div class="b" style="left:388px;top:0px;width:1px;height:20px;background:#6a8ad0"></div>
<div class="b" style="left:705px;top:0px;width:1px;height:20px;background:#6a8ad0"></div>
<div class="b" style="left:739px;top:0px;width:1px;height:20px;background:#6a8ad0"></div>
<div class="b" style="left:757px;top:0px;width:1px;height:20px;background:#6a8ad0"></div>
<div class="b" style="left:775px;top:0px;width:1px;height:20px;background:#6a8ad0"></div>
<div class="b" style="left:877px;top:0px;width:1px;height:20px;background:#6a8ad0"></div>
<div class="b" style="left:1055px;top:0px;width:1px;height:20px;background:#6a8ad0"></div>
<div class="b" style="left:1222px;top:0px;width:1px;height:20px;background:#6a8ad0"></div>
<div class="b" style="left:1393px;top:0px;width:1px;height:20px;background:#6a8ad0"></div>
<div class="b" style="left:1427px;top:0px;width:1px;height:20px;background:#6a8ad0"></div>
<div class="b" style="left:1601px;top:0px;width:1px;height:20px;background:#6a8ad0"></div>
<div class="b" style="left:26px;top:39px;width:1575px;height:1px;background:#e1e1e1"></div>
<div class="b" style="left:0px;top:39px;width:25px;height:1px;background:#dadada"></div>
<div class="b" style="left:26px;top:59px;width:1575px;height:1px;background:#e1e1e1"></div>
<div class="b" style="left:0px;top:59px;width:25px;height:1px;background:#dadada"></div>
<div class="b" style="left:26px;top:79px;width:1575px;height:1px;background:#e1e1e1"></div>
<div class="b" style="left:0px;top:79px;width:25px;height:1px;background:#dadada"></div>
<div class="b" style="left:26px;top:99px;width:1575px;height:1px;background:#e1e1e1"></div>
<div class="b" style="left:0px;top:99px;width:25px;height:1px;background:#dadada"></div>
<div class="b" style="left:26px;top:119px;width:1575px;height:1px;background:#e1e1e1"></div>
<div class="b" style="left:0px;top:119px;width:25px;height:1px;background:#dadada"></div>
<div class="b" style="left:26px;top:139px;width:1575px;height:1px;background:#e1e1e1"></div>
<div class="b" style="left:0px;top:139px;width:25px;height:1px;background:#dadada"></div>
<div class="b" style="left:26px;top:159px;width:1575px;height:1px;background:#e1e1e1"></div>
<div class="b" style="left:0px;top:159px;width:25px;height:1px;background:#dadada"></div>
<div class="b" style="left:26px;top:179px;width:1575px;height:1px;background:#e1e1e1"></div>
<div class="b" style="left:0px;top:179px;width:25px;height:1px;background:#dadada"></div>
<div class="b" style="left:26px;top:199px;width:1575px;height:1px;background:#e1e1e1"></div>
<div class="b" style="left:0px;top:199px;width:25px;height:1px;background:#dadada"></div>
<div class="b" style="left:26px;top:219px;width:1575px;height:1px;background:#e1e1e1"></div>
<div class="b" style="left:0px;top:219px;width:25px;height:1px;background:#dadada"></div>
<div class="b" style="left:26px;top:239px;width:1575px;height:1px;background:#e1e1e1"></div>
<div class="b" style="left:0px;top:239px;width:25px;height:1px;background:#dadada"></div>
<div class="b" style="left:26px;top:259px;width:1575px;height:1px;background:#e1e1e1"></div>
<div class="b" style="left:0px;top:259px;width:25px;height:1px;background:#dadada"></div>
<div class="b" style="left:26px;top:279px;width:1575px;height:1px;background:#e1e1e1"></div>
<div class="b" style="left:0px;top:279px;width:25px;height:1px;background:#dadada"></div>
<div class="b" style="left:26px;top:299px;width:1575px;height:1px;background:#e1e1e1"></div>
<div class="b" style="left:0px;top:299px;width:25px;height:1px;background:#dadada"></div>
<div class="b" style="left:26px;top:319px;width:1575px;height:1px;background:#e1e1e1"></div>
<div class="b" style="left:0px;top:319px;width:25px;height:1px;background:#dadada"></div>
<div class="b" style="left:26px;top:339px;width:1575px;height:1px;background:#e1e1e1"></div>
<div class="b" style="left:0px;top:339px;width:25px;height:1px;background:#dadada"></div>
<div class="b" style="left:878px;top:340px;width:177px;height:19px;background:#ffff00"></div>
<div class="b" style="left:1056px;top:340px;width:166px;height:19px;background:#ffff00"></div>
<div class="b" style="left:26px;top:359px;width:1575px;height:1px;background:#e1e1e1"></div>
<div class="b" style="left:0px;top:359px;width:25px;height:1px;background:#dadada"></div>
<div class="b" style="left:26px;top:379px;width:1575px;height:1px;background:#e1e1e1"></div>
<div class="b" style="left:0px;top:379px;width:25px;height:1px;background:#dadada"></div>
<div class="b" style="left:26px;top:399px;width:1575px;height:1px;background:#e1e1e1"></div>
<div class="b" style="left:0px;top:399px;width:25px;height:1px;background:#dadada"></div>
<div class="b" style="left:26px;top:419px;width:1575px;height:1px;background:#e1e1e1"></div>
<div class="b" style="left:0px;top:419px;width:25px;height:1px;background:#dadada"></div>
<div class="b" style="left:26px;top:439px;width:1575px;height:1px;background:#e1e1e1"></div>
<div class="b" style="left:0px;top:439px;width:25px;height:1px;background:#dadada"></div>
<div class="b" style="left:26px;top:459px;width:1575px;height:1px;background:#e1e1e1"></div>
<div class="b" style="left:0px;top:459px;width:25px;height:1px;background:#dadada"></div>
<div class="b" style="left:26px;top:479px;width:1575px;height:1px;background:#e1e1e1"></div>
<div class="b" style="left:0px;top:479px;width:25px;height:1px;background:#dadada"></div>
<div class="b" style="left:26px;top:499px;width:1575px;height:1px;background:#e1e1e1"></div>
<div class="b" style="left:0px;top:499px;width:25px;height:1px;background:#dadada"></div>
<div class="b" style="left:26px;top:519px;width:1575px;height:1px;background:#e1e1e1"></div>
<div class="b" style="left:0px;top:519px;width:25px;height:1px;background:#dadada"></div>
<div class="b" style="left:26px;top:539px;width:1575px;height:1px;background:#e1e1e1"></div>
<div class="b" style="left:0px;top:539px;width:25px;height:1px;background:#dadada"></div>
<div class="b" style="left:26px;top:559px;width:1575px;height:1px;background:#e1e1e1"></div>
<div class="b" style="left:0px;top:559px;width:25px;height:1px;background:#dadada"></div>
<div class="b" style="left:26px;top:579px;width:1575px;height:1px;background:#e1e1e1"></div>
<div class="b" style="left:0px;top:579px;width:25px;height:1px;background:#dadada"></div>
<div class="b" style="left:26px;top:599px;width:1575px;height:1px;background:#e1e1e1"></div>
<div class="b" style="left:0px;top:599px;width:25px;height:1px;background:#dadada"></div>
<div class="b" style="left:26px;top:619px;width:1575px;height:1px;background:#e1e1e1"></div>
<div class="b" style="left:0px;top:619px;width:25px;height:1px;background:#dadada"></div>
<div class="b" style="left:26px;top:639px;width:1575px;height:1px;background:#e1e1e1"></div>
<div class="b" style="left:0px;top:639px;width:25px;height:1px;background:#dadada"></div>
<div class="b" style="left:26px;top:659px;width:1575px;height:1px;background:#e1e1e1"></div>
<div class="b" style="left:0px;top:659px;width:25px;height:1px;background:#dadada"></div>
<div class="b" style="left:26px;top:679px;width:1575px;height:1px;background:#e1e1e1"></div>
<div class="b" style="left:0px;top:679px;width:25px;height:1px;background:#dadada"></div>
<div class="b" style="left:26px;top:699px;width:1575px;height:1px;background:#e1e1e1"></div>
<div class="b" style="left:0px;top:699px;width:25px;height:1px;background:#dadada"></div>
<div class="b" style="left:26px;top:719px;width:1575px;height:1px;background:#e1e1e1"></div>
<div class="b" style="left:0px;top:719px;width:25px;height:1px;background:#dadada"></div>
<div class="b" style="left:26px;top:739px;width:1575px;height:1px;background:#e1e1e1"></div>
<div class="b" style="left:0px;top:739px;width:25px;height:1px;background:#dadada"></div>
<div class="b" style="left:26px;top:759px;width:1575px;height:1px;background:#e1e1e1"></div>
<div class="b" style="left:0px;top:759px;width:25px;height:1px;background:#dadada"></div>
<div class="b" style="left:105px;top:19px;width:1px;height:747px;background:#e1e1e1"></div>
<div class="b" style="left:185px;top:19px;width:1px;height:747px;background:#e1e1e1"></div>
<div class="b" style="left:388px;top:19px;width:1px;height:747px;background:#e1e1e1"></div>
<div class="b" style="left:705px;top:19px;width:1px;height:747px;background:#e1e1e1"></div>
<div class="b" style="left:739px;top:19px;width:1px;height:747px;background:#e1e1e1"></div>
<div class="b" style="left:757px;top:19px;width:1px;height:747px;background:#e1e1e1"></div>
<div class="b" style="left:775px;top:19px;width:1px;height:747px;background:#e1e1e1"></div>
<div class="b" style="left:877px;top:19px;width:1px;height:747px;background:#e1e1e1"></div>
<div class="b" style="left:1055px;top:19px;width:1px;height:747px;background:#e1e1e1"></div>
<div class="b" style="left:1222px;top:19px;width:1px;height:747px;background:#e1e1e1"></div>
<div class="b" style="left:1393px;top:19px;width:1px;height:747px;background:#e1e1e1"></div>
<div class="b" style="left:1427px;top:19px;width:1px;height:747px;background:#e1e1e1"></div>
<div class="b" style="left:1601px;top:19px;width:1px;height:747px;background:#e1e1e1"></div>
<div class="b" style="left:0px;top:19px;width:25px;height:21px;background:#e1e1e1"></div>
<div class="b" style="left:0px;top:19px;width:25px;height:1px;background:#c4c4c4"></div>
<div class="b" style="left:0px;top:39px;width:25px;height:1px;background:#c4c4c4"></div>
<div class="b" style="left:24px;top:19px;width:2px;height:21px;background:#217346"></div>
</div>
<div class="b" style="left:0px;top:233px;width:1898px;height:747px;overflow:hidden;">
<div class="t" style="left:8.88px;top:23.00px;font-size:13px;line-height:16px;color:#217346;">2</div>
<div class="t" style="left:28.00px;top:21.67px;font-size:12.5px;line-height:16px;color:#333333;">173024644</div>
<div class="t" style="left:122.63px;top:21.50px;font-size:13px;line-height:16px;color:#333333;transform:scaleX(0.9500);transform-origin:0 0;">Pending</div>
<div class="t" style="left:213.14px;top:21.50px;font-size:13px;line-height:16px;color:#333333;">Proof reviewed - no issue</div>
<div class="t" style="left:536.66px;top:21.50px;font-size:13px;line-height:16px;color:#333333;">N/A</div>
<div class="t" style="left:718.38px;top:21.50px;font-size:13px;line-height:16px;color:#333333;">6</div>
<div class="b" style="left:740px;top:20px;width:17px;height:19px;overflow:hidden">
<div class="t" style="left:0.00px;top:1.50px;font-size:13px;line-height:16px;color:#333333;">IC_</div>
</div>
<div class="b" style="left:758px;top:20px;width:17px;height:19px;overflow:hidden">
<div class="t" style="left:0.00px;top:1.50px;font-size:13px;line-height:16px;color:#333333;">ISH</div>
</div>
<div class="b" style="left:775px;top:20px;width:102px;height:19px;overflow:hidden">
<div class="t" style="left:1.00px;top:1.50px;font-size:13px;line-height:16px;color:#333333;">15:11:24.1500000</div>
</div>
<div class="t" style="left:947.23px;top:21.50px;font-size:13px;line-height:16px;color:#333333;transform:scaleX(0.9500);transform-origin:0 0;">MApdo</div>
<div class="t" style="left:1119.43px;top:21.50px;font-size:13px;line-height:16px;color:#333333;transform:scaleX(0.9500);transform-origin:0 0;">MApdo</div>
<div class="t" style="left:1475.00px;top:21.50px;font-size:13px;line-height:16px;color:#333333;">aar</div>
<div class="t" style="left:1533.00px;top:21.50px;font-size:13px;line-height:16px;color:#333333;">gais</div>
<svg class="b" style="left:26px;top:20px" width="7" height="7"><path d="M0 0H6.5L0 6.5Z" fill="#1e7b34"/></svg>
<div class="t" style="left:8.88px;top:43.00px;font-size:13px;line-height:16px;color:#3b3b3b;">3</div>
<div class="t" style="left:28.00px;top:41.67px;font-size:12.5px;line-height:16px;color:#333333;">173025081</div>
<div class="t" style="left:122.63px;top:41.50px;font-size:13px;line-height:16px;color:#333333;transform:scaleX(0.9500);transform-origin:0 0;">Pending</div>
<div class="t" style="left:213.14px;top:41.50px;font-size:13px;line-height:16px;color:#333333;">Proof reviewed - no issue</div>
<div class="t" style="left:536.66px;top:41.50px;font-size:13px;line-height:16px;color:#333333;">N/A</div>
<div class="t" style="left:718.38px;top:41.50px;font-size:13px;line-height:16px;color:#333333;">1</div>
<div class="b" style="left:740px;top:40px;width:17px;height:19px;overflow:hidden">
<div class="t" style="left:0.00px;top:1.50px;font-size:13px;line-height:16px;color:#333333;">IC_</div>
</div>
<div class="b" style="left:758px;top:40px;width:17px;height:19px;overflow:hidden">
<div class="t" style="left:0.00px;top:1.50px;font-size:13px;line-height:16px;color:#333333;">ISH</div>
</div>
<div class="b" style="left:775px;top:40px;width:102px;height:19px;overflow:hidden">
<div class="t" style="left:1.00px;top:1.50px;font-size:13px;line-height:16px;color:#333333;">08:42:21.1200000</div>
</div>
<div class="t" style="left:933.15px;top:41.50px;font-size:13px;line-height:16px;color:#333333;transform:scaleX(0.9500);transform-origin:0 0;">JoSemillano</div>
<div class="t" style="left:1105.35px;top:41.50px;font-size:13px;line-height:16px;color:#333333;transform:scaleX(0.9500);transform-origin:0 0;">JoSemillano</div>
<div class="t" style="left:1475.00px;top:41.50px;font-size:13px;line-height:16px;color:#333333;">aar</div>
<div class="t" style="left:1533.00px;top:41.50px;font-size:13px;line-height:16px;color:#333333;">gais</div>
<svg class="b" style="left:26px;top:40px" width="7" height="7"><path d="M0 0H6.5L0 6.5Z" fill="#1e7b34"/></svg>
<div class="t" style="left:8.88px;top:63.00px;font-size:13px;line-height:16px;color:#3b3b3b;">4</div>
<div class="t" style="left:28.00px;top:61.67px;font-size:12.5px;line-height:16px;color:#333333;">173365596</div>
<div class="t" style="left:122.63px;top:61.50px;font-size:13px;line-height:16px;color:#333333;transform:scaleX(0.9500);transform-origin:0 0;">Pending</div>
<div class="t" style="left:213.14px;top:61.50px;font-size:13px;line-height:16px;color:#333333;">Proof reviewed - no issue</div>
<div class="t" style="left:487.88px;top:61.50px;font-size:13px;line-height:16px;color:#333333;">N/A , no discrepancy</div>
<div class="t" style="left:718.38px;top:61.50px;font-size:13px;line-height:16px;color:#333333;">1</div>
<div class="b" style="left:740px;top:60px;width:17px;height:19px;overflow:hidden">
<div class="t" style="left:0.00px;top:1.50px;font-size:13px;line-height:16px;color:#333333;">IC_</div>
</div>
<div class="b" style="left:758px;top:60px;width:17px;height:19px;overflow:hidden">
<div class="t" style="left:0.00px;top:1.50px;font-size:13px;line-height:16px;color:#333333;">ISH</div>
</div>
<div class="b" style="left:775px;top:60px;width:102px;height:19px;overflow:hidden">
<div class="t" style="left:1.00px;top:1.50px;font-size:13px;line-height:16px;color:#333333;">08:25:58.3400000</div>
</div>
<div class="t" style="left:944.82px;top:61.50px;font-size:13px;line-height:16px;color:#333333;transform:scaleX(0.9500);transform-origin:0 0;">NSausa</div>
<div class="t" style="left:1117.02px;top:61.50px;font-size:13px;line-height:16px;color:#333333;transform:scaleX(0.9500);transform-origin:0 0;">NSausa</div>
<div class="t" style="left:1292.21px;top:61.50px;font-size:13px;line-height:16px;color:#333333;transform:scaleX(0.9500);transform-origin:0 0;">JApat</div>
<div class="t" style="left:1475.00px;top:61.50px;font-size:13px;line-height:16px;color:#333333;">aar</div>
<div class="t" style="left:1533.00px;top:61.50px;font-size:13px;line-height:16px;color:#333333;">gais</div>
<svg class="b" style="left:26px;top:60px" width="7" height="7"><path d="M0 0H6.5L0 6.5Z" fill="#1e7b34"/></svg>
<div class="t" style="left:8.88px;top:83.00px;font-size:13px;line-height:16px;color:#3b3b3b;">5</div>
<div class="t" style="left:28.00px;top:81.67px;font-size:12.5px;line-height:16px;color:#333333;">173507475</div>
<div class="t" style="left:122.63px;top:81.50px;font-size:13px;line-height:16px;color:#333333;transform:scaleX(0.9500);transform-origin:0 0;">Pending</div>
<div class="t" style="left:213.14px;top:81.50px;font-size:13px;line-height:16px;color:#333333;">Proof reviewed - no issue</div>
<div class="t" style="left:536.66px;top:81.50px;font-size:13px;line-height:16px;color:#333333;">N/A</div>
<div class="t" style="left:718.38px;top:81.50px;font-size:13px;line-height:16px;color:#333333;">1</div>
<div class="b" style="left:740px;top:80px;width:17px;height:19px;overflow:hidden">
<div class="t" style="left:0.00px;top:1.50px;font-size:13px;line-height:16px;color:#333333;">IC_</div>
</div>
<div class="b" style="left:758px;top:80px;width:17px;height:19px;overflow:hidden">
<div class="t" style="left:0.00px;top:1.50px;font-size:13px;line-height:16px;color:#333333;">ISH</div>
</div>
<div class="b" style="left:775px;top:80px;width:102px;height:19px;overflow:hidden">
<div class="t" style="left:1.00px;top:1.50px;font-size:13px;line-height:16px;color:#333333;">08:48:07.7900000</div>
</div>
<div class="t" style="left:937.96px;top:81.50px;font-size:13px;line-height:16px;color:#333333;transform:scaleX(0.9500);transform-origin:0 0;">JNavisaga</div>
<div class="t" style="left:1110.16px;top:81.50px;font-size:13px;line-height:16px;color:#333333;transform:scaleX(0.9500);transform-origin:0 0;">JNavisaga</div>
<div class="t" style="left:1475.00px;top:81.50px;font-size:13px;line-height:16px;color:#333333;">aar</div>
<div class="t" style="left:1533.00px;top:81.50px;font-size:13px;line-height:16px;color:#333333;">gais</div>
<svg class="b" style="left:26px;top:80px" width="7" height="7"><path d="M0 0H6.5L0 6.5Z" fill="#1e7b34"/></svg>
<div class="t" style="left:8.88px;top:103.00px;font-size:13px;line-height:16px;color:#3b3b3b;">6</div>
<div class="t" style="left:28.00px;top:101.67px;font-size:12.5px;line-height:16px;color:#333333;">173570899</div>
<div class="t" style="left:122.63px;top:101.50px;font-size:13px;line-height:16px;color:#333333;transform:scaleX(0.9500);transform-origin:0 0;">Pending</div>
<div class="t" style="left:213.14px;top:101.50px;font-size:13px;line-height:16px;color:#333333;">Proof reviewed - no issue</div>
<div class="t" style="left:536.66px;top:101.50px;font-size:13px;line-height:16px;color:#333333;">N/A</div>
<div class="t" style="left:718.38px;top:101.50px;font-size:13px;line-height:16px;color:#333333;">3</div>
<div class="b" style="left:740px;top:100px;width:17px;height:19px;overflow:hidden">
<div class="t" style="left:0.00px;top:1.50px;font-size:13px;line-height:16px;color:#333333;">IC_</div>
</div>
<div class="b" style="left:758px;top:100px;width:17px;height:19px;overflow:hidden">
<div class="t" style="left:0.00px;top:1.50px;font-size:13px;line-height:16px;color:#333333;">ISH</div>
</div>
<div class="b" style="left:775px;top:100px;width:102px;height:19px;overflow:hidden">
<div class="t" style="left:1.00px;top:1.50px;font-size:13px;line-height:16px;color:#333333;">14:34:23.1800000</div>
</div>
<div class="t" style="left:927.66px;top:101.50px;font-size:13px;line-height:16px;color:#333333;transform:scaleX(0.9500);transform-origin:0 0;">CrMagtutunod</div>
<div class="t" style="left:1099.86px;top:101.50px;font-size:13px;line-height:16px;color:#333333;transform:scaleX(0.9500);transform-origin:0 0;">CrMagtutunod</div>
<div class="t" style="left:1475.00px;top:101.50px;font-size:13px;line-height:16px;color:#333333;">aar</div>
<div class="t" style="left:1533.00px;top:101.50px;font-size:13px;line-height:16px;color:#333333;">gais</div>
<svg class="b" style="left:26px;top:100px" width="7" height="7"><path d="M0 0H6.5L0 6.5Z" fill="#1e7b34"/></svg>
<div class="t" style="left:8.88px;top:123.00px;font-size:13px;line-height:16px;color:#3b3b3b;">7</div>
<div class="t" style="left:28.00px;top:121.67px;font-size:12.5px;line-height:16px;color:#333333;">173633124</div>
<div class="t" style="left:122.63px;top:121.50px;font-size:13px;line-height:16px;color:#333333;transform:scaleX(0.9500);transform-origin:0 0;">Pending</div>
<div class="t" style="left:213.14px;top:121.50px;font-size:13px;line-height:16px;color:#333333;">Proof reviewed - no issue</div>
<div class="t" style="left:536.66px;top:121.50px;font-size:13px;line-height:16px;color:#333333;">N/A</div>
<div class="t" style="left:718.38px;top:121.50px;font-size:13px;line-height:16px;color:#333333;">3</div>
<div class="b" style="left:740px;top:120px;width:17px;height:19px;overflow:hidden">
<div class="t" style="left:0.00px;top:1.50px;font-size:13px;line-height:16px;color:#333333;">IC_</div>
</div>
<div class="b" style="left:758px;top:120px;width:17px;height:19px;overflow:hidden">
<div class="t" style="left:0.00px;top:1.50px;font-size:13px;line-height:16px;color:#333333;">ISH</div>
</div>
<div class="b" style="left:775px;top:120px;width:102px;height:19px;overflow:hidden">
<div class="t" style="left:1.00px;top:1.50px;font-size:13px;line-height:16px;color:#333333;">12:25:28.3200000</div>
</div>
<div class="t" style="left:945.86px;top:121.50px;font-size:13px;line-height:16px;color:#333333;transform:scaleX(0.9500);transform-origin:0 0;">ReEren</div>
<div class="t" style="left:1118.06px;top:121.50px;font-size:13px;line-height:16px;color:#333333;transform:scaleX(0.9500);transform-origin:0 0;">ReEren</div>
<div class="t" style="left:1475.00px;top:121.50px;font-size:13px;line-height:16px;color:#333333;">aar</div>
<div class="t" style="left:1533.00px;top:121.50px;font-size:13px;line-height:16px;color:#333333;">gais</div>
<svg class="b" style="left:26px;top:120px" width="7" height="7"><path d="M0 0H6.5L0 6.5Z" fill="#1e7b34"/></svg>
<div class="t" style="left:8.88px;top:143.00px;font-size:13px;line-height:16px;color:#3b3b3b;">8</div>
<div class="t" style="left:28.00px;top:141.67px;font-size:12.5px;line-height:16px;color:#333333;">173787664</div>
<div class="t" style="left:122.63px;top:141.50px;font-size:13px;line-height:16px;color:#333333;transform:scaleX(0.9500);transform-origin:0 0;">Pending</div>
<div class="t" style="left:213.14px;top:141.50px;font-size:13px;line-height:16px;color:#333333;">Proof reviewed - no issue</div>
<div class="t" style="left:536.66px;top:141.50px;font-size:13px;line-height:16px;color:#333333;">N/A</div>
<div class="t" style="left:718.38px;top:141.50px;font-size:13px;line-height:16px;color:#333333;">3</div>
<div class="b" style="left:740px;top:140px;width:17px;height:19px;overflow:hidden">
<div class="t" style="left:0.00px;top:1.50px;font-size:13px;line-height:16px;color:#333333;">IC_</div>
</div>
<div class="b" style="left:758px;top:140px;width:17px;height:19px;overflow:hidden">
<div class="t" style="left:0.00px;top:1.50px;font-size:13px;line-height:16px;color:#333333;">AS</div>
</div>
<div class="b" style="left:877px;top:140px;width:1px;height:19px;background:#fff"></div>
<div class="b" style="left:775px;top:140px;width:140px;height:19px;overflow:hidden">
<div class="t" style="left:1.00px;top:1.50px;font-size:13px;line-height:16px;color:#333333;">18:01:31.7200000</div>
</div>
<div class="t" style="left:1475.00px;top:141.50px;font-size:13px;line-height:16px;color:#333333;">aar</div>
<div class="t" style="left:1533.00px;top:141.50px;font-size:13px;line-height:16px;color:#333333;">gais</div>
<svg class="b" style="left:26px;top:140px" width="7" height="7"><path d="M0 0H6.5L0 6.5Z" fill="#1e7b34"/></svg>
<div class="t" style="left:8.88px;top:163.00px;font-size:13px;line-height:16px;color:#3b3b3b;">9</div>
<div class="t" style="left:28.00px;top:161.67px;font-size:12.5px;line-height:16px;color:#333333;">173787664</div>
<div class="t" style="left:122.63px;top:161.50px;font-size:13px;line-height:16px;color:#333333;transform:scaleX(0.9500);transform-origin:0 0;">Pending</div>
<div class="t" style="left:213.14px;top:161.50px;font-size:13px;line-height:16px;color:#333333;">Proof reviewed - no issue</div>
<div class="t" style="left:536.66px;top:161.50px;font-size:13px;line-height:16px;color:#333333;">N/A</div>
<div class="t" style="left:718.38px;top:161.50px;font-size:13px;line-height:16px;color:#333333;">3</div>
<div class="b" style="left:740px;top:160px;width:17px;height:19px;overflow:hidden">
<div class="t" style="left:0.00px;top:1.50px;font-size:13px;line-height:16px;color:#333333;">IC_</div>
</div>
<div class="b" style="left:758px;top:160px;width:17px;height:19px;overflow:hidden">
<div class="t" style="left:0.00px;top:1.50px;font-size:13px;line-height:16px;color:#333333;">ISH</div>
</div>
<div class="b" style="left:775px;top:160px;width:102px;height:19px;overflow:hidden">
<div class="t" style="left:1.00px;top:1.50px;font-size:13px;line-height:16px;color:#333333;">11:22:58.4100000</div>
</div>
<div class="t" style="left:937.96px;top:161.50px;font-size:13px;line-height:16px;color:#333333;transform:scaleX(0.9500);transform-origin:0 0;">JNavisaga</div>
<div class="t" style="left:1110.16px;top:161.50px;font-size:13px;line-height:16px;color:#333333;transform:scaleX(0.9500);transform-origin:0 0;">JNavisaga</div>
<div class="t" style="left:1475.00px;top:161.50px;font-size:13px;line-height:16px;color:#333333;">aar</div>
<div class="t" style="left:1533.00px;top:161.50px;font-size:13px;line-height:16px;color:#333333;">gais</div>
<svg class="b" style="left:26px;top:160px" width="7" height="7"><path d="M0 0H6.5L0 6.5Z" fill="#1e7b34"/></svg>
<div class="t" style="left:5.27px;top:183.00px;font-size:13px;line-height:16px;color:#3b3b3b;">10</div>
<div class="t" style="left:28.00px;top:181.67px;font-size:12.5px;line-height:16px;color:#333333;">173922212</div>
<div class="t" style="left:122.63px;top:181.50px;font-size:13px;line-height:16px;color:#333333;transform:scaleX(0.9500);transform-origin:0 0;">Pending</div>
<div class="t" style="left:213.14px;top:181.50px;font-size:13px;line-height:16px;color:#333333;">Proof reviewed - no issue</div>
<div class="t" style="left:536.66px;top:181.50px;font-size:13px;line-height:16px;color:#333333;">N/A</div>
<div class="t" style="left:718.38px;top:181.50px;font-size:13px;line-height:16px;color:#333333;">2</div>
<div class="b" style="left:740px;top:180px;width:17px;height:19px;overflow:hidden">
<div class="t" style="left:0.00px;top:1.50px;font-size:13px;line-height:16px;color:#333333;">IC_</div>
</div>
<div class="b" style="left:758px;top:180px;width:17px;height:19px;overflow:hidden">
<div class="t" style="left:0.00px;top:1.50px;font-size:13px;line-height:16px;color:#333333;">ISH</div>
</div>
<div class="b" style="left:775px;top:180px;width:102px;height:19px;overflow:hidden">
<div class="t" style="left:1.00px;top:1.50px;font-size:13px;line-height:16px;color:#333333;">15:17:12.1400000</div>
</div>
<div class="t" style="left:947.23px;top:181.50px;font-size:13px;line-height:16px;color:#333333;transform:scaleX(0.9500);transform-origin:0 0;">MApdo</div>
<div class="t" style="left:1119.43px;top:181.50px;font-size:13px;line-height:16px;color:#333333;transform:scaleX(0.9500);transform-origin:0 0;">MApdo</div>
<div class="t" style="left:1475.00px;top:181.50px;font-size:13px;line-height:16px;color:#333333;">aar</div>
<div class="t" style="left:1533.00px;top:181.50px;font-size:13px;line-height:16px;color:#333333;">gais</div>
<svg class="b" style="left:26px;top:180px" width="7" height="7"><path d="M0 0H6.5L0 6.5Z" fill="#1e7b34"/></svg>
<div class="t" style="left:5.75px;top:203.00px;font-size:13px;line-height:16px;color:#3b3b3b;">11</div>
<div class="t" style="left:28.00px;top:201.67px;font-size:12.5px;line-height:16px;color:#333333;">173924313</div>
<div class="t" style="left:122.63px;top:201.50px;font-size:13px;line-height:16px;color:#333333;transform:scaleX(0.9500);transform-origin:0 0;">Pending</div>
<div class="t" style="left:213.14px;top:201.50px;font-size:13px;line-height:16px;color:#333333;">Proof reviewed - no issue</div>
<div class="t" style="left:536.66px;top:201.50px;font-size:13px;line-height:16px;color:#333333;">N/A</div>
<div class="t" style="left:718.38px;top:201.50px;font-size:13px;line-height:16px;color:#333333;">1</div>
<div class="b" style="left:740px;top:200px;width:17px;height:19px;overflow:hidden">
<div class="t" style="left:0.00px;top:1.50px;font-size:13px;line-height:16px;color:#333333;">IC_</div>
</div>
<div class="b" style="left:758px;top:200px;width:17px;height:19px;overflow:hidden">
<div class="t" style="left:0.00px;top:1.50px;font-size:13px;line-height:16px;color:#333333;">AS</div>
</div>
<div class="b" style="left:877px;top:200px;width:1px;height:19px;background:#fff"></div>
<div class="b" style="left:775px;top:200px;width:140px;height:19px;overflow:hidden">
<div class="t" style="left:1.00px;top:1.50px;font-size:13px;line-height:16px;color:#333333;">15:54:00.7300000</div>
</div>
<div class="t" style="left:1475.00px;top:201.50px;font-size:13px;line-height:16px;color:#333333;">aar</div>
<div class="t" style="left:1533.00px;top:201.50px;font-size:13px;line-height:16px;color:#333333;">gais</div>
<svg class="b" style="left:26px;top:200px" width="7" height="7"><path d="M0 0H6.5L0 6.5Z" fill="#1e7b34"/></svg>
<div class="t" style="left:5.27px;top:223.00px;font-size:13px;line-height:16px;color:#3b3b3b;">12</div>
<div class="t" style="left:28.00px;top:221.67px;font-size:12.5px;line-height:16px;color:#333333;">173924313</div>
<div class="t" style="left:122.63px;top:221.50px;font-size:13px;line-height:16px;color:#333333;transform:scaleX(0.9500);transform-origin:0 0;">Pending</div>
<div class="t" style="left:213.14px;top:221.50px;font-size:13px;line-height:16px;color:#333333;">Proof reviewed - no issue</div>
<div class="t" style="left:536.66px;top:221.50px;font-size:13px;line-height:16px;color:#333333;">N/A</div>
<div class="t" style="left:718.38px;top:221.50px;font-size:13px;line-height:16px;color:#333333;">7</div>
<div class="b" style="left:740px;top:220px;width:17px;height:19px;overflow:hidden">
<div class="t" style="left:0.00px;top:1.50px;font-size:13px;line-height:16px;color:#333333;">IC_</div>
</div>
<div class="b" style="left:758px;top:220px;width:17px;height:19px;overflow:hidden">
<div class="t" style="left:0.00px;top:1.50px;font-size:13px;line-height:16px;color:#333333;">ISH</div>
</div>
<div class="b" style="left:775px;top:220px;width:102px;height:19px;overflow:hidden">
<div class="t" style="left:1.00px;top:1.50px;font-size:13px;line-height:16px;color:#333333;">13:45:20.6400000</div>
</div>
<div class="t" style="left:947.23px;top:221.50px;font-size:13px;line-height:16px;color:#333333;transform:scaleX(0.9500);transform-origin:0 0;">MApdo</div>
<div class="t" style="left:1119.43px;top:221.50px;font-size:13px;line-height:16px;color:#333333;transform:scaleX(0.9500);transform-origin:0 0;">MApdo</div>
<div class="t" style="left:1475.00px;top:221.50px;font-size:13px;line-height:16px;color:#333333;">aar</div>
<div class="t" style="left:1533.00px;top:221.50px;font-size:13px;line-height:16px;color:#333333;">gais</div>
<svg class="b" style="left:26px;top:220px" width="7" height="7"><path d="M0 0H6.5L0 6.5Z" fill="#1e7b34"/></svg>
<div class="t" style="left:5.27px;top:243.00px;font-size:13px;line-height:16px;color:#3b3b3b;">13</div>
<div class="t" style="left:28.00px;top:241.67px;font-size:12.5px;line-height:16px;color:#333333;">173978146</div>
<div class="t" style="left:122.63px;top:241.50px;font-size:13px;line-height:16px;color:#333333;transform:scaleX(0.9500);transform-origin:0 0;">Pending</div>
<div class="t" style="left:213.14px;top:241.50px;font-size:13px;line-height:16px;color:#333333;">Proof reviewed - no issue</div>
<div class="t" style="left:536.66px;top:241.50px;font-size:13px;line-height:16px;color:#333333;">N/A</div>
<div class="t" style="left:718.38px;top:241.50px;font-size:13px;line-height:16px;color:#333333;">2</div>
<div class="b" style="left:740px;top:240px;width:17px;height:19px;overflow:hidden">
<div class="t" style="left:0.00px;top:1.50px;font-size:13px;line-height:16px;color:#333333;">IC_</div>
</div>
<div class="b" style="left:758px;top:240px;width:17px;height:19px;overflow:hidden">
<div class="t" style="left:0.00px;top:1.50px;font-size:13px;line-height:16px;color:#333333;">AS</div>
</div>
<div class="b" style="left:877px;top:240px;width:1px;height:19px;background:#fff"></div>
<div class="b" style="left:775px;top:240px;width:140px;height:19px;overflow:hidden">
<div class="t" style="left:1.00px;top:1.50px;font-size:13px;line-height:16px;color:#333333;">16:52:31.8800000</div>
</div>
<div class="t" style="left:1475.00px;top:241.50px;font-size:13px;line-height:16px;color:#333333;">aar</div>
<div class="t" style="left:1533.00px;top:241.50px;font-size:13px;line-height:16px;color:#333333;">gais</div>
<svg class="b" style="left:26px;top:240px" width="7" height="7"><path d="M0 0H6.5L0 6.5Z" fill="#1e7b34"/></svg>
<div class="t" style="left:5.27px;top:263.00px;font-size:13px;line-height:16px;color:#3b3b3b;">14</div>
<div class="t" style="left:28.00px;top:261.67px;font-size:12.5px;line-height:16px;color:#333333;">173993803</div>
<div class="t" style="left:122.63px;top:261.50px;font-size:13px;line-height:16px;color:#333333;transform:scaleX(0.9500);transform-origin:0 0;">Pending</div>
<div class="t" style="left:213.14px;top:261.50px;font-size:13px;line-height:16px;color:#333333;">Proof reviewed - no issue</div>
<div class="t" style="left:536.66px;top:261.50px;font-size:13px;line-height:16px;color:#333333;">N/A</div>
<div class="t" style="left:718.38px;top:261.50px;font-size:13px;line-height:16px;color:#333333;">1</div>
<div class="b" style="left:740px;top:260px;width:17px;height:19px;overflow:hidden">
<div class="t" style="left:0.00px;top:1.50px;font-size:13px;line-height:16px;color:#333333;">IC_</div>
</div>
<div class="b" style="left:758px;top:260px;width:17px;height:19px;overflow:hidden">
<div class="t" style="left:0.00px;top:1.50px;font-size:13px;line-height:16px;color:#333333;">ISH</div>
</div>
<div class="b" style="left:775px;top:260px;width:102px;height:19px;overflow:hidden">
<div class="t" style="left:1.00px;top:1.50px;font-size:13px;line-height:16px;color:#333333;">10:49:03.3300000</div>
</div>
<div class="t" style="left:947.23px;top:261.50px;font-size:13px;line-height:16px;color:#333333;transform:scaleX(0.9500);transform-origin:0 0;">MApdo</div>
<div class="t" style="left:1111.88px;top:261.50px;font-size:13px;line-height:16px;color:#333333;transform:scaleX(0.9500);transform-origin:0 0;">ENarvasa</div>
<div class="t" style="left:1475.00px;top:261.50px;font-size:13px;line-height:16px;color:#333333;">aar</div>
<div class="t" style="left:1533.00px;top:261.50px;font-size:13px;line-height:16px;color:#333333;">gais</div>
<svg class="b" style="left:26px;top:260px" width="7" height="7"><path d="M0 0H6.5L0 6.5Z" fill="#1e7b34"/></svg>
<div class="t" style="left:5.27px;top:283.00px;font-size:13px;line-height:16px;color:#3b3b3b;">15</div>
<div class="t" style="left:28.00px;top:281.67px;font-size:12.5px;line-height:16px;color:#333333;">173999600</div>
<div class="t" style="left:122.63px;top:281.50px;font-size:13px;line-height:16px;color:#333333;transform:scaleX(0.9500);transform-origin:0 0;">Pending</div>
<div class="t" style="left:213.14px;top:281.50px;font-size:13px;line-height:16px;color:#333333;">Proof reviewed - no issue</div>
<div class="t" style="left:536.66px;top:281.50px;font-size:13px;line-height:16px;color:#333333;">N/A</div>
<div class="t" style="left:718.38px;top:281.50px;font-size:13px;line-height:16px;color:#333333;">3</div>
<div class="b" style="left:740px;top:280px;width:17px;height:19px;overflow:hidden">
<div class="t" style="left:0.00px;top:1.50px;font-size:13px;line-height:16px;color:#333333;">IC_</div>
</div>
<div class="b" style="left:758px;top:280px;width:17px;height:19px;overflow:hidden">
<div class="t" style="left:0.00px;top:1.50px;font-size:13px;line-height:16px;color:#333333;">ISH</div>
</div>
<div class="b" style="left:775px;top:280px;width:102px;height:19px;overflow:hidden">
<div class="t" style="left:1.00px;top:1.50px;font-size:13px;line-height:16px;color:#333333;">11:50:45.2700000</div>
</div>
<div class="t" style="left:933.15px;top:281.50px;font-size:13px;line-height:16px;color:#333333;transform:scaleX(0.9500);transform-origin:0 0;">JoSemillano</div>
<div class="t" style="left:1105.35px;top:281.50px;font-size:13px;line-height:16px;color:#333333;transform:scaleX(0.9500);transform-origin:0 0;">JoSemillano</div>
<div class="t" style="left:1475.00px;top:281.50px;font-size:13px;line-height:16px;color:#333333;">aar</div>
<div class="t" style="left:1533.00px;top:281.50px;font-size:13px;line-height:16px;color:#333333;">gais</div>
<svg class="b" style="left:26px;top:280px" width="7" height="7"><path d="M0 0H6.5L0 6.5Z" fill="#1e7b34"/></svg>
<div class="t" style="left:5.27px;top:303.00px;font-size:13px;line-height:16px;color:#3b3b3b;">16</div>
<div class="t" style="left:28.00px;top:301.67px;font-size:12.5px;line-height:16px;color:#333333;">174036474</div>
<div class="t" style="left:122.63px;top:301.50px;font-size:13px;line-height:16px;color:#333333;transform:scaleX(0.9500);transform-origin:0 0;">Pending</div>
<div class="t" style="left:213.14px;top:301.50px;font-size:13px;line-height:16px;color:#333333;">Proof reviewed - no issue</div>
<div class="t" style="left:536.66px;top:301.50px;font-size:13px;line-height:16px;color:#333333;">N/A</div>
<div class="t" style="left:718.38px;top:301.50px;font-size:13px;line-height:16px;color:#333333;">2</div>
<div class="b" style="left:740px;top:300px;width:17px;height:19px;overflow:hidden">
<div class="t" style="left:0.00px;top:1.50px;font-size:13px;line-height:16px;color:#333333;">IC_</div>
</div>
<div class="b" style="left:758px;top:300px;width:17px;height:19px;overflow:hidden">
<div class="t" style="left:0.00px;top:1.50px;font-size:13px;line-height:16px;color:#333333;">AS</div>
</div>
<div class="b" style="left:877px;top:300px;width:1px;height:19px;background:#fff"></div>
<div class="b" style="left:775px;top:300px;width:140px;height:19px;overflow:hidden">
<div class="t" style="left:1.00px;top:1.50px;font-size:13px;line-height:16px;color:#333333;">15:55:51.6800000</div>
</div>
<div class="t" style="left:1475.00px;top:301.50px;font-size:13px;line-height:16px;color:#333333;">aar</div>
<div class="t" style="left:1533.00px;top:301.50px;font-size:13px;line-height:16px;color:#333333;">gais</div>
<svg class="b" style="left:26px;top:300px" width="7" height="7"><path d="M0 0H6.5L0 6.5Z" fill="#1e7b34"/></svg>
<div class="t" style="left:5.27px;top:323.00px;font-size:13px;line-height:16px;color:#3b3b3b;">17</div>
<div class="t" style="left:28.00px;top:321.67px;font-size:12.5px;line-height:16px;color:#333333;">174038285</div>
<div class="t" style="left:120.92px;top:321.50px;font-size:13px;line-height:16px;color:#333333;transform:scaleX(0.9500);transform-origin:0 0;">Rejected</div>
<div class="t" style="left:213.14px;top:321.50px;font-size:13px;line-height:16px;color:#333333;">Proof reviewed - no issue</div>
<div class="t" style="left:536.66px;top:321.50px;font-size:13px;line-height:16px;color:#333333;">N/A</div>
<div class="t" style="left:718.38px;top:321.50px;font-size:13px;line-height:16px;color:#333333;">1</div>
<div class="b" style="left:740px;top:320px;width:17px;height:19px;overflow:hidden">
<div class="t" style="left:-3.00px;top:1.50px;font-size:13px;line-height:16px;color:#333333;">UES</div>
</div>
<div class="b" style="left:758px;top:320px;width:17px;height:19px;overflow:hidden">
<div class="t" style="left:0.00px;top:1.50px;font-size:13px;line-height:16px;color:#333333;">ISH</div>
</div>
<div class="b" style="left:775px;top:320px;width:102px;height:19px;overflow:hidden">
<div class="t" style="left:1.00px;top:1.50px;font-size:13px;line-height:16px;color:#333333;">15:58:22.0600000</div>
</div>
<div class="t" style="left:927.66px;top:321.50px;font-size:13px;line-height:16px;color:#333333;transform:scaleX(0.9500);transform-origin:0 0;">CrMagtutunod</div>
<div class="t" style="left:1102.26px;top:321.50px;font-size:13px;line-height:16px;color:#333333;transform:scaleX(0.9500);transform-origin:0 0;">MRebadomia</div>
<div class="t" style="left:1475.00px;top:321.50px;font-size:13px;line-height:16px;color:#333333;">aar</div>
<div class="t" style="left:1533.00px;top:321.50px;font-size:13px;line-height:16px;color:#333333;">gais</div>
<svg class="b" style="left:26px;top:320px" width="7" height="7"><path d="M0 0H6.5L0 6.5Z" fill="#1e7b34"/></svg>
<div class="t" style="left:5.27px;top:343.00px;font-size:13px;line-height:16px;color:#3b3b3b;">18</div>
<div class="t" style="left:28.00px;top:341.67px;font-size:12.5px;line-height:16px;color:#333333;">174065891</div>
<div class="t" style="left:122.63px;top:341.50px;font-size:13px;line-height:16px;color:#333333;transform:scaleX(0.9500);transform-origin:0 0;">Pending</div>
<div class="t" style="left:211.34px;top:341.50px;font-size:13px;line-height:16px;color:#333333;">Approved - Program proof</div>
<div class="t" style="left:406.54px;top:341.50px;font-size:13px;line-height:16px;color:#333333;">Medicaid card valid no need back part to be valid</div>
<div class="t" style="left:718.38px;top:341.50px;font-size:13px;line-height:16px;color:#333333;">3</div>
<div class="b" style="left:740px;top:340px;width:17px;height:19px;overflow:hidden">
<div class="t" style="left:0.00px;top:1.50px;font-size:13px;line-height:16px;color:#333333;">IC_</div>
</div>
<div class="b" style="left:758px;top:340px;width:17px;height:19px;overflow:hidden">
<div class="t" style="left:0.00px;top:1.50px;font-size:13px;line-height:16px;color:#333333;">ISH</div>
</div>
<div class="b" style="left:775px;top:340px;width:102px;height:19px;overflow:hidden">
<div class="t" style="left:1.00px;top:1.50px;font-size:13px;line-height:16px;color:#333333;">14:05:43.1000000</div>
</div>
<div class="t" style="left:924.92px;top:341.50px;font-size:13px;line-height:16px;color:#333333;transform:scaleX(0.9500);transform-origin:0 0;">AlessaGuzman</div>
<div class="t" style="left:1097.12px;top:341.50px;font-size:13px;line-height:16px;color:#333333;transform:scaleX(0.9500);transform-origin:0 0;">AlessaGuzman</div>
<div class="t" style="left:1475.00px;top:341.50px;font-size:13px;line-height:16px;color:#333333;">aar</div>
<div class="t" style="left:1533.00px;top:341.50px;font-size:13px;line-height:16px;color:#333333;">gais</div>
<svg class="b" style="left:26px;top:340px" width="7" height="7"><path d="M0 0H6.5L0 6.5Z" fill="#1e7b34"/></svg>
<div class="t" style="left:5.27px;top:363.00px;font-size:13px;line-height:16px;color:#3b3b3b;">19</div>
<div class="t" style="left:28.00px;top:361.67px;font-size:12.5px;line-height:16px;color:#333333;">174114920</div>
<div class="t" style="left:122.63px;top:361.50px;font-size:13px;line-height:16px;color:#333333;transform:scaleX(0.9500);transform-origin:0 0;">Pending</div>
<div class="t" style="left:213.14px;top:361.50px;font-size:13px;line-height:16px;color:#333333;">Proof reviewed - no issue</div>
<div class="t" style="left:536.66px;top:361.50px;font-size:13px;line-height:16px;color:#333333;">N/A</div>
<div class="t" style="left:718.38px;top:361.50px;font-size:13px;line-height:16px;color:#333333;">1</div>
<div class="b" style="left:740px;top:360px;width:17px;height:19px;overflow:hidden">
<div class="t" style="left:0.00px;top:1.50px;font-size:13px;line-height:16px;color:#333333;">IC_</div>
</div>
<div class="b" style="left:758px;top:360px;width:17px;height:19px;overflow:hidden">
<div class="t" style="left:0.00px;top:1.50px;font-size:13px;line-height:16px;color:#333333;">ISH</div>
</div>
<div class="b" style="left:775px;top:360px;width:102px;height:19px;overflow:hidden">
<div class="t" style="left:1.00px;top:1.50px;font-size:13px;line-height:16px;color:#333333;">12:57:52.4600000</div>
</div>
<div class="t" style="left:947.23px;top:361.50px;font-size:13px;line-height:16px;color:#333333;transform:scaleX(0.9500);transform-origin:0 0;">MApdo</div>
<div class="t" style="left:1107.08px;top:361.50px;font-size:13px;line-height:16px;color:#333333;transform:scaleX(0.9500);transform-origin:0 0;">CComawas</div>
<div class="t" style="left:1475.00px;top:361.50px;font-size:13px;line-height:16px;color:#333333;">aar</div>
<div class="t" style="left:1533.00px;top:361.50px;font-size:13px;line-height:16px;color:#333333;">gais</div>
<svg class="b" style="left:26px;top:360px" width="7" height="7"><path d="M0 0H6.5L0 6.5Z" fill="#1e7b34"/></svg>
<div class="t" style="left:5.27px;top:383.00px;font-size:13px;line-height:16px;color:#3b3b3b;">20</div>
<div class="t" style="left:28.00px;top:381.67px;font-size:12.5px;line-height:16px;color:#333333;">174122391</div>
<div class="t" style="left:122.63px;top:381.50px;font-size:13px;line-height:16px;color:#333333;transform:scaleX(0.9500);transform-origin:0 0;">Pending</div>
<div class="t" style="left:213.14px;top:381.50px;font-size:13px;line-height:16px;color:#333333;">Proof reviewed - no issue</div>
<div class="t" style="left:536.66px;top:381.50px;font-size:13px;line-height:16px;color:#333333;">N/A</div>
<div class="t" style="left:718.38px;top:381.50px;font-size:13px;line-height:16px;color:#333333;">1</div>
<div class="b" style="left:740px;top:380px;width:17px;height:19px;overflow:hidden">
<div class="t" style="left:0.00px;top:1.50px;font-size:13px;line-height:16px;color:#333333;">IC_</div>
</div>
<div class="b" style="left:758px;top:380px;width:17px;height:19px;overflow:hidden">
<div class="t" style="left:0.00px;top:1.50px;font-size:13px;line-height:16px;color:#333333;">ISH</div>
</div>
<div class="b" style="left:775px;top:380px;width:102px;height:19px;overflow:hidden">
<div class="t" style="left:1.00px;top:1.50px;font-size:13px;line-height:16px;color:#333333;">08:28:38.3700000</div>
</div>
<div class="t" style="left:942.53px;top:381.50px;font-size:13px;line-height:16px;color:#333333;transform:scaleX(0.9500);transform-origin:0 0;">PAllende</div>
<div class="t" style="left:1114.73px;top:381.50px;font-size:13px;line-height:16px;color:#333333;transform:scaleX(0.9500);transform-origin:0 0;">PAllende</div>
<div class="t" style="left:1475.00px;top:381.50px;font-size:13px;line-height:16px;color:#333333;">aar</div>
<div class="t" style="left:1533.00px;top:381.50px;font-size:13px;line-height:16px;color:#333333;">gais</div>
<svg class="b" style="left:26px;top:380px" width="7" height="7"><path d="M0 0H6.5L0 6.5Z" fill="#1e7b34"/></svg>
<div class="t" style="left:5.27px;top:403.00px;font-size:13px;line-height:16px;color:#3b3b3b;">21</div>
<div class="t" style="left:28.00px;top:401.67px;font-size:12.5px;line-height:16px;color:#333333;">174126693</div>
<div class="t" style="left:122.63px;top:401.50px;font-size:13px;line-height:16px;color:#333333;transform:scaleX(0.9500);transform-origin:0 0;">Pending</div>
<div class="t" style="left:213.14px;top:401.50px;font-size:13px;line-height:16px;color:#333333;">Proof reviewed - no issue</div>
<div class="t" style="left:536.66px;top:401.50px;font-size:13px;line-height:16px;color:#333333;">N/A</div>
<div class="t" style="left:718.38px;top:401.50px;font-size:13px;line-height:16px;color:#333333;">1</div>
<div class="b" style="left:740px;top:400px;width:17px;height:19px;overflow:hidden">
<div class="t" style="left:0.00px;top:1.50px;font-size:13px;line-height:16px;color:#333333;">IC_</div>
</div>
<div class="b" style="left:758px;top:400px;width:17px;height:19px;overflow:hidden">
<div class="t" style="left:0.00px;top:1.50px;font-size:13px;line-height:16px;color:#333333;">ISH</div>
</div>
<div class="b" style="left:775px;top:400px;width:102px;height:19px;overflow:hidden">
<div class="t" style="left:1.00px;top:1.50px;font-size:13px;line-height:16px;color:#333333;">09:08:02.1900000</div>
</div>
<div class="t" style="left:937.96px;top:401.50px;font-size:13px;line-height:16px;color:#333333;transform:scaleX(0.9500);transform-origin:0 0;">JNavisaga</div>
<div class="t" style="left:1110.16px;top:401.50px;font-size:13px;line-height:16px;color:#333333;transform:scaleX(0.9500);transform-origin:0 0;">JNavisaga</div>
<div class="t" style="left:1475.00px;top:401.50px;font-size:13px;line-height:16px;color:#333333;">aar</div>
<div class="t" style="left:1533.00px;top:401.50px;font-size:13px;line-height:16px;color:#333333;">gais</div>
<svg class="b" style="left:26px;top:400px" width="7" height="7"><path d="M0 0H6.5L0 6.5Z" fill="#1e7b34"/></svg>
<div class="t" style="left:5.27px;top:423.00px;font-size:13px;line-height:16px;color:#3b3b3b;">22</div>
<div class="t" style="left:28.00px;top:421.67px;font-size:12.5px;line-height:16px;color:#333333;">174140639</div>
<div class="t" style="left:122.63px;top:421.50px;font-size:13px;line-height:16px;color:#333333;transform:scaleX(0.9500);transform-origin:0 0;">Pending</div>
<div class="t" style="left:213.14px;top:421.50px;font-size:13px;line-height:16px;color:#333333;">Proof reviewed - no issue</div>
<div class="t" style="left:536.66px;top:421.50px;font-size:13px;line-height:16px;color:#333333;">N/A</div>
<div class="t" style="left:718.38px;top:421.50px;font-size:13px;line-height:16px;color:#333333;">1</div>
<div class="b" style="left:740px;top:420px;width:17px;height:19px;overflow:hidden">
<div class="t" style="left:0.00px;top:1.50px;font-size:13px;line-height:16px;color:#333333;">IC_</div>
</div>
<div class="b" style="left:758px;top:420px;width:17px;height:19px;overflow:hidden">
<div class="t" style="left:0.00px;top:1.50px;font-size:13px;line-height:16px;color:#333333;">AS</div>
</div>
<div class="b" style="left:877px;top:420px;width:1px;height:19px;background:#fff"></div>
<div class="b" style="left:775px;top:420px;width:140px;height:19px;overflow:hidden">
<div class="t" style="left:1.00px;top:1.50px;font-size:13px;line-height:16px;color:#333333;">15:49:53.9300000</div>
</div>
<div class="t" style="left:1475.00px;top:421.50px;font-size:13px;line-height:16px;color:#333333;">aar</div>
<div class="t" style="left:1533.00px;top:421.50px;font-size:13px;line-height:16px;color:#333333;">gais</div>
<svg class="b" style="left:26px;top:420px" width="7" height="7"><path d="M0 0H6.5L0 6.5Z" fill="#1e7b34"/></svg>
<div class="t" style="left:5.27px;top:443.00px;font-size:13px;line-height:16px;color:#3b3b3b;">23</div>
<div class="t" style="left:28.00px;top:441.67px;font-size:12.5px;line-height:16px;color:#333333;">174142198</div>
<div class="t" style="left:120.92px;top:441.50px;font-size:13px;line-height:16px;color:#333333;transform:scaleX(0.9500);transform-origin:0 0;">Rejected</div>
<div class="t" style="left:213.14px;top:441.50px;font-size:13px;line-height:16px;color:#333333;">Proof reviewed - no issue</div>
<div class="t" style="left:536.66px;top:441.50px;font-size:13px;line-height:16px;color:#333333;">N/A</div>
<div class="t" style="left:718.38px;top:441.50px;font-size:13px;line-height:16px;color:#333333;">2</div>
<div class="b" style="left:740px;top:440px;width:17px;height:19px;overflow:hidden">
<div class="t" style="left:-3.00px;top:1.50px;font-size:13px;line-height:16px;color:#333333;">UES</div>
</div>
<div class="b" style="left:758px;top:440px;width:17px;height:19px;overflow:hidden">
<div class="t" style="left:0.00px;top:1.50px;font-size:13px;line-height:16px;color:#333333;">ISH</div>
</div>
<div class="b" style="left:775px;top:440px;width:102px;height:19px;overflow:hidden">
<div class="t" style="left:1.00px;top:1.50px;font-size:13px;line-height:16px;color:#333333;">17:32:47.1200000</div>
</div>
<div class="t" style="left:933.85px;top:441.50px;font-size:13px;line-height:16px;color:#333333;transform:scaleX(0.9500);transform-origin:0 0;">MBelarmino</div>
<div class="t" style="left:1106.05px;top:441.50px;font-size:13px;line-height:16px;color:#333333;transform:scaleX(0.9500);transform-origin:0 0;">MBelarmino</div>
<div class="t" style="left:1475.00px;top:441.50px;font-size:13px;line-height:16px;color:#333333;">aar</div>
<div class="t" style="left:1533.00px;top:441.50px;font-size:13px;line-height:16px;color:#333333;">gais</div>
<svg class="b" style="left:26px;top:440px" width="7" height="7"><path d="M0 0H6.5L0 6.5Z" fill="#1e7b34"/></svg>
<div class="t" style="left:5.27px;top:463.00px;font-size:13px;line-height:16px;color:#3b3b3b;">24</div>
<div class="t" style="left:28.00px;top:461.67px;font-size:12.5px;line-height:16px;color:#333333;">174150603</div>
<div class="t" style="left:114.39px;top:461.50px;font-size:13px;line-height:16px;color:#333333;transform:scaleX(0.9500);transform-origin:0 0;">Unqualified</div>
<div class="t" style="left:213.14px;top:461.50px;font-size:13px;line-height:16px;color:#333333;">Proof reviewed - no issue</div>
<div class="t" style="left:536.66px;top:461.50px;font-size:13px;line-height:16px;color:#333333;">N/A</div>
<div class="t" style="left:718.38px;top:461.50px;font-size:13px;line-height:16px;color:#333333;">1</div>
<div class="b" style="left:740px;top:460px;width:17px;height:19px;overflow:hidden">
<div class="t" style="left:-3.00px;top:1.50px;font-size:13px;line-height:16px;color:#333333;">UES</div>
</div>
<div class="b" style="left:758px;top:460px;width:17px;height:19px;overflow:hidden">
<div class="t" style="left:0.00px;top:1.50px;font-size:13px;line-height:16px;color:#333333;">ISH</div>
</div>
<div class="b" style="left:775px;top:460px;width:102px;height:19px;overflow:hidden">
<div class="t" style="left:1.00px;top:1.50px;font-size:13px;line-height:16px;color:#333333;">11:25:25.3000000</div>
</div>
<div class="t" style="left:945.86px;top:461.50px;font-size:13px;line-height:16px;color:#333333;transform:scaleX(0.9500);transform-origin:0 0;">DeCruz</div>
<div class="t" style="left:1118.06px;top:461.50px;font-size:13px;line-height:16px;color:#333333;transform:scaleX(0.9500);transform-origin:0 0;">DeCruz</div>
<div class="t" style="left:1475.00px;top:461.50px;font-size:13px;line-height:16px;color:#333333;">aar</div>
<div class="t" style="left:1533.00px;top:461.50px;font-size:13px;line-height:16px;color:#333333;">gais</div>
<svg class="b" style="left:26px;top:460px" width="7" height="7"><path d="M0 0H6.5L0 6.5Z" fill="#1e7b34"/></svg>
<div class="t" style="left:5.27px;top:483.00px;font-size:13px;line-height:16px;color:#3b3b3b;">25</div>
<div class="t" style="left:28.00px;top:481.67px;font-size:12.5px;line-height:16px;color:#333333;">174150603</div>
<div class="t" style="left:114.39px;top:481.50px;font-size:13px;line-height:16px;color:#333333;transform:scaleX(0.9500);transform-origin:0 0;">Unqualified</div>
<div class="t" style="left:213.14px;top:481.50px;font-size:13px;line-height:16px;color:#333333;">Proof reviewed - no issue</div>
<div class="t" style="left:536.66px;top:481.50px;font-size:13px;line-height:16px;color:#333333;">N/A</div>
<div class="t" style="left:718.38px;top:481.50px;font-size:13px;line-height:16px;color:#333333;">1</div>
<div class="b" style="left:740px;top:480px;width:17px;height:19px;overflow:hidden">
<div class="t" style="left:-3.00px;top:1.50px;font-size:13px;line-height:16px;color:#333333;">UES</div>
</div>
<div class="b" style="left:758px;top:480px;width:17px;height:19px;overflow:hidden">
<div class="t" style="left:0.00px;top:1.50px;font-size:13px;line-height:16px;color:#333333;">ISH</div>
</div>
<div class="b" style="left:775px;top:480px;width:102px;height:19px;overflow:hidden">
<div class="t" style="left:1.00px;top:1.50px;font-size:13px;line-height:16px;color:#333333;">11:17:18.8000000</div>
</div>
<div class="t" style="left:937.96px;top:481.50px;font-size:13px;line-height:16px;color:#333333;transform:scaleX(0.9500);transform-origin:0 0;">JNavisaga</div>
<div class="t" style="left:1110.16px;top:481.50px;font-size:13px;line-height:16px;color:#333333;transform:scaleX(0.9500);transform-origin:0 0;">JNavisaga</div>
<div class="t" style="left:1475.00px;top:481.50px;font-size:13px;line-height:16px;color:#333333;">aar</div>
<div class="t" style="left:1533.00px;top:481.50px;font-size:13px;line-height:16px;color:#333333;">gais</div>
<svg class="b" style="left:26px;top:480px" width="7" height="7"><path d="M0 0H6.5L0 6.5Z" fill="#1e7b34"/></svg>
<div class="t" style="left:5.27px;top:503.00px;font-size:13px;line-height:16px;color:#3b3b3b;">26</div>
<div class="t" style="left:28.00px;top:501.67px;font-size:12.5px;line-height:16px;color:#333333;">174150603</div>
<div class="t" style="left:114.39px;top:501.50px;font-size:13px;line-height:16px;color:#333333;transform:scaleX(0.9500);transform-origin:0 0;">Unqualified</div>
<div class="t" style="left:213.14px;top:501.50px;font-size:13px;line-height:16px;color:#333333;">Proof reviewed - no issue</div>
<div class="t" style="left:536.66px;top:501.50px;font-size:13px;line-height:16px;color:#333333;">N/A</div>
<div class="t" style="left:718.38px;top:501.50px;font-size:13px;line-height:16px;color:#333333;">1</div>
<div class="b" style="left:740px;top:500px;width:17px;height:19px;overflow:hidden">
<div class="t" style="left:-3.00px;top:1.50px;font-size:13px;line-height:16px;color:#333333;">UES</div>
</div>
<div class="b" style="left:758px;top:500px;width:17px;height:19px;overflow:hidden">
<div class="t" style="left:0.00px;top:1.50px;font-size:13px;line-height:16px;color:#333333;">ISH</div>
</div>
<div class="b" style="left:775px;top:500px;width:102px;height:19px;overflow:hidden">
<div class="t" style="left:1.00px;top:1.50px;font-size:13px;line-height:16px;color:#333333;">11:42:46.6100000</div>
</div>
<div class="t" style="left:937.96px;top:501.50px;font-size:13px;line-height:16px;color:#333333;transform:scaleX(0.9500);transform-origin:0 0;">JNavisaga</div>
<div class="t" style="left:1110.16px;top:501.50px;font-size:13px;line-height:16px;color:#333333;transform:scaleX(0.9500);transform-origin:0 0;">JNavisaga</div>
<div class="t" style="left:1475.00px;top:501.50px;font-size:13px;line-height:16px;color:#333333;">aar</div>
<div class="t" style="left:1533.00px;top:501.50px;font-size:13px;line-height:16px;color:#333333;">gais</div>
<svg class="b" style="left:26px;top:500px" width="7" height="7"><path d="M0 0H6.5L0 6.5Z" fill="#1e7b34"/></svg>
<div class="t" style="left:5.27px;top:523.00px;font-size:13px;line-height:16px;color:#3b3b3b;">27</div>
<div class="t" style="left:28.00px;top:521.67px;font-size:12.5px;line-height:16px;color:#333333;">174150603</div>
<div class="t" style="left:114.39px;top:521.50px;font-size:13px;line-height:16px;color:#333333;transform:scaleX(0.9500);transform-origin:0 0;">Unqualified</div>
<div class="t" style="left:213.14px;top:521.50px;font-size:13px;line-height:16px;color:#333333;">Proof reviewed - no issue</div>
<div class="t" style="left:536.66px;top:521.50px;font-size:13px;line-height:16px;color:#333333;">N/A</div>
<div class="t" style="left:718.38px;top:521.50px;font-size:13px;line-height:16px;color:#333333;">1</div>
<div class="b" style="left:740px;top:520px;width:17px;height:19px;overflow:hidden">
<div class="t" style="left:-3.00px;top:1.50px;font-size:13px;line-height:16px;color:#333333;">UES</div>
</div>
<div class="b" style="left:758px;top:520px;width:17px;height:19px;overflow:hidden">
<div class="t" style="left:0.00px;top:1.50px;font-size:13px;line-height:16px;color:#333333;">ISH</div>
</div>
<div class="b" style="left:775px;top:520px;width:102px;height:19px;overflow:hidden">
<div class="t" style="left:1.00px;top:1.50px;font-size:13px;line-height:16px;color:#333333;">11:21:14.5600000</div>
</div>
<div class="t" style="left:951.01px;top:521.50px;font-size:13px;line-height:16px;color:#333333;transform:scaleX(0.9500);transform-origin:0 0;">JApat</div>
<div class="t" style="left:1118.06px;top:521.50px;font-size:13px;line-height:16px;color:#333333;transform:scaleX(0.9500);transform-origin:0 0;">DeCruz</div>
<div class="t" style="left:1475.00px;top:521.50px;font-size:13px;line-height:16px;color:#333333;">aar</div>
<div class="t" style="left:1533.00px;top:521.50px;font-size:13px;line-height:16px;color:#333333;">gais</div>
<svg class="b" style="left:26px;top:520px" width="7" height="7"><path d="M0 0H6.5L0 6.5Z" fill="#1e7b34"/></svg>
<div class="t" style="left:5.27px;top:543.00px;font-size:13px;line-height:16px;color:#3b3b3b;">28</div>
<div class="t" style="left:28.00px;top:541.67px;font-size:12.5px;line-height:16px;color:#333333;">174153465</div>
<div class="t" style="left:122.63px;top:541.50px;font-size:13px;line-height:16px;color:#333333;transform:scaleX(0.9500);transform-origin:0 0;">Pending</div>
<div class="t" style="left:213.14px;top:541.50px;font-size:13px;line-height:16px;color:#333333;">Proof reviewed - no issue</div>
<div class="t" style="left:536.66px;top:541.50px;font-size:13px;line-height:16px;color:#333333;">N/A</div>
<div class="t" style="left:718.38px;top:541.50px;font-size:13px;line-height:16px;color:#333333;">1</div>
<div class="b" style="left:740px;top:540px;width:17px;height:19px;overflow:hidden">
<div class="t" style="left:0.00px;top:1.50px;font-size:13px;line-height:16px;color:#333333;">IC_</div>
</div>
<div class="b" style="left:758px;top:540px;width:17px;height:19px;overflow:hidden">
<div class="t" style="left:0.00px;top:1.50px;font-size:13px;line-height:16px;color:#333333;">ISH</div>
</div>
<div class="b" style="left:775px;top:540px;width:102px;height:19px;overflow:hidden">
<div class="t" style="left:1.00px;top:1.50px;font-size:13px;line-height:16px;color:#333333;">09:50:07.3200000</div>
</div>
<div class="t" style="left:937.96px;top:541.50px;font-size:13px;line-height:16px;color:#333333;transform:scaleX(0.9500);transform-origin:0 0;">JNavisaga</div>
<div class="t" style="left:1118.06px;top:541.50px;font-size:13px;line-height:16px;color:#333333;transform:scaleX(0.9500);transform-origin:0 0;">JTobias</div>
<div class="t" style="left:1475.00px;top:541.50px;font-size:13px;line-height:16px;color:#333333;">aar</div>
<div class="t" style="left:1533.00px;top:541.50px;font-size:13px;line-height:16px;color:#333333;">gais</div>
<svg class="b" style="left:26px;top:540px" width="7" height="7"><path d="M0 0H6.5L0 6.5Z" fill="#1e7b34"/></svg>
<div class="t" style="left:5.27px;top:563.00px;font-size:13px;line-height:16px;color:#3b3b3b;">29</div>
<div class="t" style="left:28.00px;top:561.67px;font-size:12.5px;line-height:16px;color:#333333;">174153465</div>
<div class="t" style="left:122.63px;top:561.50px;font-size:13px;line-height:16px;color:#333333;transform:scaleX(0.9500);transform-origin:0 0;">Pending</div>
<div class="t" style="left:213.14px;top:561.50px;font-size:13px;line-height:16px;color:#333333;">Proof reviewed - no issue</div>
<div class="t" style="left:536.66px;top:561.50px;font-size:13px;line-height:16px;color:#333333;">N/A</div>
<div class="t" style="left:718.38px;top:561.50px;font-size:13px;line-height:16px;color:#333333;">1</div>
<div class="b" style="left:740px;top:560px;width:17px;height:19px;overflow:hidden">
<div class="t" style="left:0.00px;top:1.50px;font-size:13px;line-height:16px;color:#333333;">IC_</div>
</div>
<div class="b" style="left:758px;top:560px;width:17px;height:19px;overflow:hidden">
<div class="t" style="left:0.00px;top:1.50px;font-size:13px;line-height:16px;color:#333333;">ISH</div>
</div>
<div class="b" style="left:775px;top:560px;width:102px;height:19px;overflow:hidden">
<div class="t" style="left:1.00px;top:1.50px;font-size:13px;line-height:16px;color:#333333;">09:31:40.6000000</div>
</div>
<div class="t" style="left:943.12px;top:561.50px;font-size:13px;line-height:16px;color:#333333;transform:scaleX(0.9500);transform-origin:0 0;">LJTorres</div>
<div class="t" style="left:1115.32px;top:561.50px;font-size:13px;line-height:16px;color:#333333;transform:scaleX(0.9500);transform-origin:0 0;">LJTorres</div>
<div class="t" style="left:1475.00px;top:561.50px;font-size:13px;line-height:16px;color:#333333;">aar</div>
<div class="t" style="left:1533.00px;top:561.50px;font-size:13px;line-height:16px;color:#333333;">gais</div>
<svg class="b" style="left:26px;top:560px" width="7" height="7"><path d="M0 0H6.5L0 6.5Z" fill="#1e7b34"/></svg>
<div class="t" style="left:5.27px;top:583.00px;font-size:13px;line-height:16px;color:#3b3b3b;">30</div>
<div class="t" style="left:28.00px;top:581.67px;font-size:12.5px;line-height:16px;color:#333333;">174154486</div>
<div class="t" style="left:122.63px;top:581.50px;font-size:13px;line-height:16px;color:#333333;transform:scaleX(0.9500);transform-origin:0 0;">Pending</div>
<div class="t" style="left:213.14px;top:581.50px;font-size:13px;line-height:16px;color:#333333;">Proof reviewed - no issue</div>
<div class="t" style="left:536.66px;top:581.50px;font-size:13px;line-height:16px;color:#333333;">N/A</div>
<div class="t" style="left:718.38px;top:581.50px;font-size:13px;line-height:16px;color:#333333;">1</div>
<div class="b" style="left:740px;top:580px;width:17px;height:19px;overflow:hidden">
<div class="t" style="left:0.00px;top:1.50px;font-size:13px;line-height:16px;color:#333333;">IC_</div>
</div>
<div class="b" style="left:758px;top:580px;width:17px;height:19px;overflow:hidden">
<div class="t" style="left:0.00px;top:1.50px;font-size:13px;line-height:16px;color:#333333;">AS</div>
</div>
<div class="b" style="left:877px;top:580px;width:1px;height:19px;background:#fff"></div>
<div class="b" style="left:775px;top:580px;width:140px;height:19px;overflow:hidden">
<div class="t" style="left:1.00px;top:1.50px;font-size:13px;line-height:16px;color:#333333;">16:41:36.0100000</div>
</div>
<div class="t" style="left:1475.00px;top:581.50px;font-size:13px;line-height:16px;color:#333333;">aar</div>
<div class="t" style="left:1533.00px;top:581.50px;font-size:13px;line-height:16px;color:#333333;">gais</div>
<svg class="b" style="left:26px;top:580px" width="7" height="7"><path d="M0 0H6.5L0 6.5Z" fill="#1e7b34"/></svg>
<div class="t" style="left:5.27px;top:603.00px;font-size:13px;line-height:16px;color:#3b3b3b;">31</div>
<div class="t" style="left:28.00px;top:601.67px;font-size:12.5px;line-height:16px;color:#333333;">174154984</div>
<div class="t" style="left:122.63px;top:601.50px;font-size:13px;line-height:16px;color:#333333;transform:scaleX(0.9500);transform-origin:0 0;">Pending</div>
<div class="t" style="left:213.14px;top:601.50px;font-size:13px;line-height:16px;color:#333333;">Proof reviewed - no issue</div>
<div class="t" style="left:536.66px;top:601.50px;font-size:13px;line-height:16px;color:#333333;">N/A</div>
<div class="t" style="left:718.38px;top:601.50px;font-size:13px;line-height:16px;color:#333333;">1</div>
<div class="b" style="left:740px;top:600px;width:17px;height:19px;overflow:hidden">
<div class="t" style="left:0.00px;top:1.50px;font-size:13px;line-height:16px;color:#333333;">IC_</div>
</div>
<div class="b" style="left:758px;top:600px;width:17px;height:19px;overflow:hidden">
<div class="t" style="left:0.00px;top:1.50px;font-size:13px;line-height:16px;color:#333333;">ISH</div>
</div>
<div class="b" style="left:775px;top:600px;width:102px;height:19px;overflow:hidden">
<div class="t" style="left:1.00px;top:1.50px;font-size:13px;line-height:16px;color:#333333;">13:02:17.7200000</div>
</div>
<div class="t" style="left:947.23px;top:601.50px;font-size:13px;line-height:16px;color:#333333;transform:scaleX(0.9500);transform-origin:0 0;">MApdo</div>
<div class="t" style="left:1119.43px;top:601.50px;font-size:13px;line-height:16px;color:#333333;transform:scaleX(0.9500);transform-origin:0 0;">MApdo</div>
<div class="t" style="left:1475.00px;top:601.50px;font-size:13px;line-height:16px;color:#333333;">aar</div>
<div class="t" style="left:1533.00px;top:601.50px;font-size:13px;line-height:16px;color:#333333;">gais</div>
<svg class="b" style="left:26px;top:600px" width="7" height="7"><path d="M0 0H6.5L0 6.5Z" fill="#1e7b34"/></svg>
<div class="t" style="left:5.27px;top:623.00px;font-size:13px;line-height:16px;color:#3b3b3b;">32</div>
<div class="t" style="left:28.00px;top:621.67px;font-size:12.5px;line-height:16px;color:#333333;">174155319</div>
<div class="t" style="left:122.63px;top:621.50px;font-size:13px;line-height:16px;color:#333333;transform:scaleX(0.9500);transform-origin:0 0;">Pending</div>
<div class="t" style="left:213.14px;top:621.50px;font-size:13px;line-height:16px;color:#333333;">Proof reviewed - no issue</div>
<div class="t" style="left:536.66px;top:621.50px;font-size:13px;line-height:16px;color:#333333;">N/A</div>
<div class="t" style="left:718.38px;top:621.50px;font-size:13px;line-height:16px;color:#333333;">1</div>
<div class="b" style="left:740px;top:620px;width:17px;height:19px;overflow:hidden">
<div class="t" style="left:0.00px;top:1.50px;font-size:13px;line-height:16px;color:#333333;">IC_</div>
</div>
<div class="b" style="left:758px;top:620px;width:17px;height:19px;overflow:hidden">
<div class="t" style="left:0.00px;top:1.50px;font-size:13px;line-height:16px;color:#333333;">ISH</div>
</div>
<div class="b" style="left:775px;top:620px;width:102px;height:19px;overflow:hidden">
<div class="t" style="left:1.00px;top:1.50px;font-size:13px;line-height:16px;color:#333333;">09:11:02.2300000</div>
</div>
<div class="t" style="left:941.39px;top:621.50px;font-size:13px;line-height:16px;color:#333333;transform:scaleX(0.9500);transform-origin:0 0;">NeEntela</div>
<div class="t" style="left:1105.02px;top:621.50px;font-size:13px;line-height:16px;color:#333333;transform:scaleX(0.9500);transform-origin:0 0;">Mamariegos</div>
<div class="t" style="left:1475.00px;top:621.50px;font-size:13px;line-height:16px;color:#333333;">aar</div>
<div class="t" style="left:1533.00px;top:621.50px;font-size:13px;line-height:16px;color:#333333;">gais</div>
<svg class="b" style="left:26px;top:620px" width="7" height="7"><path d="M0 0H6.5L0 6.5Z" fill="#1e7b34"/></svg>
<div class="t" style="left:5.27px;top:643.00px;font-size:13px;line-height:16px;color:#3b3b3b;">33</div>
<div class="t" style="left:28.00px;top:641.67px;font-size:12.5px;line-height:16px;color:#333333;">174155690</div>
<div class="t" style="left:114.39px;top:641.50px;font-size:13px;line-height:16px;color:#333333;transform:scaleX(0.9500);transform-origin:0 0;">Unqualified</div>
<div class="t" style="left:204.10px;top:641.50px;font-size:13px;line-height:16px;color:#333333;">Disapproved - Address proof</div>
<div class="t" style="left:469.81px;top:641.50px;font-size:13px;line-height:16px;color:#333333;">Missing address line 2 ( A )</div>
<div class="t" style="left:718.38px;top:641.50px;font-size:13px;line-height:16px;color:#333333;">2</div>
<div class="b" style="left:740px;top:640px;width:17px;height:19px;overflow:hidden">
<div class="t" style="left:-3.00px;top:1.50px;font-size:13px;line-height:16px;color:#333333;">UES</div>
</div>
<div class="b" style="left:758px;top:640px;width:17px;height:19px;overflow:hidden">
<div class="t" style="left:0.00px;top:1.50px;font-size:13px;line-height:16px;color:#333333;">ISH</div>
</div>
<div class="b" style="left:775px;top:640px;width:102px;height:19px;overflow:hidden">
<div class="t" style="left:1.00px;top:1.50px;font-size:13px;line-height:16px;color:#333333;">18:01:29.3600000</div>
</div>
<div class="t" style="left:938.98px;top:641.50px;font-size:13px;line-height:16px;color:#333333;transform:scaleX(0.9500);transform-origin:0 0;">MAlegada</div>
<div class="t" style="left:1111.88px;top:641.50px;font-size:13px;line-height:16px;color:#333333;transform:scaleX(0.9500);transform-origin:0 0;">ENarvasa</div>
<div class="t" style="left:1282.94px;top:641.50px;font-size:13px;line-height:16px;color:#333333;transform:scaleX(0.9500);transform-origin:0 0;">DaFlores</div>
<div class="t" style="left:1475.00px;top:641.50px;font-size:13px;line-height:16px;color:#333333;">aar</div>
<div class="t" style="left:1533.00px;top:641.50px;font-size:13px;line-height:16px;color:#333333;">gais</div>
<svg class="b" style="left:26px;top:640px" width="7" height="7"><path d="M0 0H6.5L0 6.5Z" fill="#1e7b34"/></svg>
<div class="t" style="left:5.27px;top:663.00px;font-size:13px;line-height:16px;color:#3b3b3b;">34</div>
<div class="t" style="left:28.00px;top:661.67px;font-size:12.5px;line-height:16px;color:#333333;">174155690</div>
<div class="t" style="left:114.39px;top:661.50px;font-size:13px;line-height:16px;color:#333333;transform:scaleX(0.9500);transform-origin:0 0;">Unqualified</div>
<div class="t" style="left:213.14px;top:661.50px;font-size:13px;line-height:16px;color:#333333;">Proof reviewed - no issue</div>
<div class="t" style="left:536.66px;top:661.50px;font-size:13px;line-height:16px;color:#333333;">N/A</div>
<div class="t" style="left:718.38px;top:661.50px;font-size:13px;line-height:16px;color:#333333;">1</div>
<div class="b" style="left:740px;top:660px;width:17px;height:19px;overflow:hidden">
<div class="t" style="left:-3.00px;top:1.50px;font-size:13px;line-height:16px;color:#333333;">UES</div>
</div>
<div class="b" style="left:758px;top:660px;width:17px;height:19px;overflow:hidden">
<div class="t" style="left:0.00px;top:1.50px;font-size:13px;line-height:16px;color:#333333;">ISH</div>
</div>
<div class="b" style="left:775px;top:660px;width:102px;height:19px;overflow:hidden">
<div class="t" style="left:1.00px;top:1.50px;font-size:13px;line-height:16px;color:#333333;">15:16:33.4800000</div>
</div>
<div class="t" style="left:934.88px;top:661.50px;font-size:13px;line-height:16px;color:#333333;transform:scaleX(0.9500);transform-origin:0 0;">CComawas</div>
<div class="t" style="left:1107.08px;top:661.50px;font-size:13px;line-height:16px;color:#333333;transform:scaleX(0.9500);transform-origin:0 0;">CComawas</div>
<div class="t" style="left:1475.00px;top:661.50px;font-size:13px;line-height:16px;color:#333333;">aar</div>
<div class="t" style="left:1533.00px;top:661.50px;font-size:13px;line-height:16px;color:#333333;">gais</div>
<svg class="b" style="left:26px;top:660px" width="7" height="7"><path d="M0 0H6.5L0 6.5Z" fill="#1e7b34"/></svg>
<div class="t" style="left:5.27px;top:683.00px;font-size:13px;line-height:16px;color:#3b3b3b;">35</div>
<div class="t" style="left:28.00px;top:681.67px;font-size:12.5px;line-height:16px;color:#333333;">174162181</div>
<div class="t" style="left:122.63px;top:681.50px;font-size:13px;line-height:16px;color:#333333;transform:scaleX(0.9500);transform-origin:0 0;">Pending</div>
<div class="t" style="left:213.14px;top:681.50px;font-size:13px;line-height:16px;color:#333333;">Proof reviewed - no issue</div>
<div class="t" style="left:536.66px;top:681.50px;font-size:13px;line-height:16px;color:#333333;">N/A</div>
<div class="t" style="left:718.38px;top:681.50px;font-size:13px;line-height:16px;color:#333333;">1</div>
<div class="b" style="left:740px;top:680px;width:17px;height:19px;overflow:hidden">
<div class="t" style="left:0.00px;top:1.50px;font-size:13px;line-height:16px;color:#333333;">IC_</div>
</div>
<div class="b" style="left:758px;top:680px;width:17px;height:19px;overflow:hidden">
<div class="t" style="left:0.00px;top:1.50px;font-size:13px;line-height:16px;color:#333333;">ISH</div>
</div>
<div class="b" style="left:775px;top:680px;width:102px;height:19px;overflow:hidden">
<div class="t" style="left:1.00px;top:1.50px;font-size:13px;line-height:16px;color:#333333;">09:23:11.0300000</div>
</div>
<div class="t" style="left:944.47px;top:681.50px;font-size:13px;line-height:16px;color:#333333;transform:scaleX(0.9500);transform-origin:0 0;">ACedon</div>
<div class="t" style="left:1110.16px;top:681.50px;font-size:13px;line-height:16px;color:#333333;transform:scaleX(0.9500);transform-origin:0 0;">JNavisaga</div>
<div class="t" style="left:1475.00px;top:681.50px;font-size:13px;line-height:16px;color:#333333;">aar</div>
<div class="t" style="left:1533.00px;top:681.50px;font-size:13px;line-height:16px;color:#333333;">gais</div>
<svg class="b" style="left:26px;top:680px" width="7" height="7"><path d="M0 0H6.5L0 6.5Z" fill="#1e7b34"/></svg>
<div class="t" style="left:5.27px;top:703.00px;font-size:13px;line-height:16px;color:#3b3b3b;">36</div>
<div class="t" style="left:28.00px;top:701.67px;font-size:12.5px;line-height:16px;color:#333333;">174169077</div>
<div class="t" style="left:120.92px;top:701.50px;font-size:13px;line-height:16px;color:#333333;transform:scaleX(0.9500);transform-origin:0 0;">Rejected</div>
<div class="t" style="left:213.14px;top:701.50px;font-size:13px;line-height:16px;color:#333333;">Proof reviewed - no issue</div>
<div class="t" style="left:536.66px;top:701.50px;font-size:13px;line-height:16px;color:#333333;">N/A</div>
<div class="t" style="left:718.38px;top:701.50px;font-size:13px;line-height:16px;color:#333333;">1</div>
<div class="b" style="left:740px;top:700px;width:17px;height:19px;overflow:hidden">
<div class="t" style="left:0.00px;top:1.50px;font-size:13px;line-height:16px;color:#333333;">IC_</div>
</div>
<div class="b" style="left:758px;top:700px;width:17px;height:19px;overflow:hidden">
<div class="t" style="left:0.00px;top:1.50px;font-size:13px;line-height:16px;color:#333333;">AS</div>
</div>
<div class="b" style="left:877px;top:700px;width:1px;height:19px;background:#fff"></div>
<div class="b" style="left:775px;top:700px;width:140px;height:19px;overflow:hidden">
<div class="t" style="left:1.00px;top:1.50px;font-size:13px;line-height:16px;color:#333333;">16:41:52.5400000</div>
</div>
<div class="t" style="left:1475.00px;top:701.50px;font-size:13px;line-height:16px;color:#333333;">aar</div>
<div class="t" style="left:1533.00px;top:701.50px;font-size:13px;line-height:16px;color:#333333;">gais</div>
<svg class="b" style="left:26px;top:700px" width="7" height="7"><path d="M0 0H6.5L0 6.5Z" fill="#1e7b34"/></svg>
<div class="t" style="left:5.27px;top:723.00px;font-size:13px;line-height:16px;color:#3b3b3b;">37</div>
<div class="t" style="left:28.00px;top:721.67px;font-size:12.5px;line-height:16px;color:#333333;">174182955</div>
<div class="t" style="left:122.63px;top:721.50px;font-size:13px;line-height:16px;color:#333333;transform:scaleX(0.9500);transform-origin:0 0;">Pending</div>
<div class="t" style="left:213.14px;top:721.50px;font-size:13px;line-height:16px;color:#333333;">Proof reviewed - no issue</div>
<div class="t" style="left:536.66px;top:721.50px;font-size:13px;line-height:16px;color:#333333;">N/A</div>
<div class="t" style="left:718.38px;top:721.50px;font-size:13px;line-height:16px;color:#333333;">1</div>
<div class="b" style="left:740px;top:720px;width:17px;height:19px;overflow:hidden">
<div class="t" style="left:0.00px;top:1.50px;font-size:13px;line-height:16px;color:#333333;">IC_</div>
</div>
<div class="b" style="left:758px;top:720px;width:17px;height:19px;overflow:hidden">
<div class="t" style="left:0.00px;top:1.50px;font-size:13px;line-height:16px;color:#333333;">AS</div>
</div>
<div class="b" style="left:877px;top:720px;width:1px;height:19px;background:#fff"></div>
<div class="b" style="left:775px;top:720px;width:140px;height:19px;overflow:hidden">
<div class="t" style="left:1.00px;top:1.50px;font-size:13px;line-height:16px;color:#333333;">15:56:54.5200000</div>
</div>
<div class="t" style="left:1475.00px;top:721.50px;font-size:13px;line-height:16px;color:#333333;">aar</div>
<div class="t" style="left:1533.00px;top:721.50px;font-size:13px;line-height:16px;color:#333333;">gais</div>
<svg class="b" style="left:26px;top:720px" width="7" height="7"><path d="M0 0H6.5L0 6.5Z" fill="#1e7b34"/></svg>
<div class="t" style="left:5.27px;top:743.00px;font-size:13px;line-height:16px;color:#3b3b3b;">38</div>
<div class="t" style="left:28.00px;top:741.67px;font-size:12.5px;line-height:16px;color:#333333;">174185024</div>
<div class="t" style="left:122.63px;top:741.50px;font-size:13px;line-height:16px;color:#333333;transform:scaleX(0.9500);transform-origin:0 0;">Pending</div>
<div class="t" style="left:213.14px;top:741.50px;font-size:13px;line-height:16px;color:#333333;">Proof reviewed - no issue</div>
<div class="t" style="left:536.66px;top:741.50px;font-size:13px;line-height:16px;color:#333333;">N/A</div>
<div class="t" style="left:718.38px;top:741.50px;font-size:13px;line-height:16px;color:#333333;">1</div>
<div class="b" style="left:740px;top:740px;width:17px;height:19px;overflow:hidden">
<div class="t" style="left:0.00px;top:1.50px;font-size:13px;line-height:16px;color:#333333;">IC_</div>
</div>
<div class="b" style="left:758px;top:740px;width:17px;height:19px;overflow:hidden">
<div class="t" style="left:0.00px;top:1.50px;font-size:13px;line-height:16px;color:#333333;">ISH</div>
</div>
<div class="b" style="left:775px;top:740px;width:102px;height:19px;overflow:hidden">
<div class="t" style="left:1.00px;top:1.50px;font-size:13px;line-height:16px;color:#333333;">09:17:36.7500000</div>
</div>
<div class="t" style="left:937.96px;top:741.50px;font-size:13px;line-height:16px;color:#333333;transform:scaleX(0.9500);transform-origin:0 0;">JNavisaga</div>
<div class="t" style="left:1117.02px;top:741.50px;font-size:13px;line-height:16px;color:#333333;transform:scaleX(0.9500);transform-origin:0 0;">PEdralo</div>
<div class="t" style="left:1475.00px;top:741.50px;font-size:13px;line-height:16px;color:#333333;">aar</div>
<div class="t" style="left:1533.00px;top:741.50px;font-size:13px;line-height:16px;color:#333333;">gais</div>
<svg class="b" style="left:26px;top:740px" width="7" height="7"><path d="M0 0H6.5L0 6.5Z" fill="#1e7b34"/></svg>
</div>
<div class="b" style="left:26px;top:233px;width:61px;height:19px;overflow:hidden">
<div class="t" style="left:3.00px;top:0.30px;font-size:15px;line-height:19px;color:#ffffff;font-weight:bold;">Enrollment Number</div>
</div>
<div class="b" style="left:88px;top:234px;width:15px;height:15px;border:1px solid #a6a6a6;background:linear-gradient(#fdfdfd,#eeeeee)"></div>
<svg class="b" style="left:91px;top:238px;" width="12" height="10" viewBox="0 0 12 10" fill="none"><path d="M2 6.5h5l-2.5 2.5z" fill="#444"/><path d="M8.5 1v8M7 2.5l1.5-1.5 1.5 1.5" stroke="#444" stroke-width="1"/></svg>
<div class="b" style="left:106px;top:233px;width:61px;height:19px;overflow:hidden">
<div class="t" style="left:16.08px;top:0.30px;font-size:15px;line-height:19px;color:#ffffff;font-weight:bold;">Status</div>
</div>
<div class="b" style="left:168px;top:234px;width:15px;height:15px;border:1px solid #a6a6a6;background:linear-gradient(#fdfdfd,#eeeeee)"></div>
<svg class="b" style="left:172px;top:240px;" width="9" height="6" viewBox="0 0 9 6" fill="none"><path d="M0.5 0.5h8l-4 4.5z" fill="#5a5a5a"/></svg>
<div class="b" style="left:186px;top:233px;width:184px;height:19px;overflow:hidden">
<div class="t" style="left:35.50px;top:0.30px;font-size:15px;line-height:19px;color:#ffffff;font-weight:bold;">QA Analyst Action</div>
</div>
<div class="b" style="left:371px;top:234px;width:15px;height:15px;border:1px solid #a6a6a6;background:linear-gradient(#fdfdfd,#eeeeee)"></div>
<svg class="b" style="left:375px;top:240px;" width="9" height="6" viewBox="0 0 9 6" fill="none"><path d="M0.5 0.5h8l-4 4.5z" fill="#5a5a5a"/></svg>
<div class="b" style="left:389px;top:233px;width:298px;height:19px;overflow:hidden">
<div class="t" style="left:136.66px;top:0.30px;font-size:15px;line-height:19px;color:#ffffff;font-weight:bold;">Notes</div>
</div>
<div class="b" style="left:688px;top:234px;width:15px;height:15px;border:1px solid #a6a6a6;background:linear-gradient(#fdfdfd,#eeeeee)"></div>
<svg class="b" style="left:692px;top:240px;" width="9" height="6" viewBox="0 0 9 6" fill="none"><path d="M0.5 0.5h8l-4 4.5z" fill="#5a5a5a"/></svg>
<div class="b" style="left:706px;top:233px;width:15px;height:19px;overflow:hidden">
<div class="t" style="left:0.00px;top:0.30px;font-size:15px;line-height:19px;color:#ffffff;font-weight:bold;">al</div>
</div>
<div class="b" style="left:722px;top:234px;width:15px;height:15px;border:1px solid #a6a6a6;background:linear-gradient(#fdfdfd,#eeeeee)"></div>
<svg class="b" style="left:726px;top:240px;" width="9" height="6" viewBox="0 0 9 6" fill="none"><path d="M0.5 0.5h8l-4 4.5z" fill="#5a5a5a"/></svg>
<div class="b" style="left:740px;top:234px;width:15px;height:15px;border:1px solid #a6a6a6;background:linear-gradient(#fdfdfd,#eeeeee)"></div>
<svg class="b" style="left:744px;top:240px;" width="9" height="6" viewBox="0 0 9 6" fill="none"><path d="M0.5 0.5h8l-4 4.5z" fill="#5a5a5a"/></svg>
<div class="b" style="left:758px;top:234px;width:15px;height:15px;border:1px solid #a6a6a6;background:linear-gradient(#fdfdfd,#eeeeee)"></div>
<svg class="b" style="left:762px;top:240px;" width="9" height="6" viewBox="0 0 9 6" fill="none"><path d="M0.5 0.5h8l-4 4.5z" fill="#5a5a5a"/></svg>
<div class="b" style="left:776px;top:233px;width:83px;height:19px;overflow:hidden">
<div class="t" style="left:11.66px;top:0.30px;font-size:15px;line-height:19px;color:#ffffff;font-weight:bold;">FinishDate</div>
</div>
<div class="b" style="left:860px;top:234px;width:15px;height:15px;border:1px solid #a6a6a6;background:linear-gradient(#fdfdfd,#eeeeee)"></div>
<svg class="b" style="left:864px;top:240px;" width="9" height="6" viewBox="0 0 9 6" fill="none"><path d="M0.5 0.5h8l-4 4.5z" fill="#5a5a5a"/></svg>
<div class="b" style="left:878px;top:233px;width:159px;height:19px;overflow:hidden">
<div class="t" style="left:22.88px;top:0.30px;font-size:15px;line-height:19px;color:#ffffff;font-weight:bold;">APPROVER Agent</div>
</div>
<div class="b" style="left:1038px;top:234px;width:15px;height:15px;border:1px solid #a6a6a6;background:linear-gradient(#fdfdfd,#eeeeee)"></div>
<svg class="b" style="left:1042px;top:240px;" width="9" height="6" viewBox="0 0 9 6" fill="none"><path d="M0.5 0.5h8l-4 4.5z" fill="#5a5a5a"/></svg>
<div class="b" style="left:1056px;top:233px;width:148px;height:19px;overflow:hidden">
<div class="t" style="left:19.46px;top:0.30px;font-size:15px;line-height:19px;color:#ffffff;font-weight:bold;">REVIEWER Agent</div>
</div>
<div class="b" style="left:1205px;top:234px;width:15px;height:15px;border:1px solid #a6a6a6;background:linear-gradient(#fdfdfd,#eeeeee)"></div>
<svg class="b" style="left:1209px;top:240px;" width="9" height="6" viewBox="0 0 9 6" fill="none"><path d="M0.5 0.5h8l-4 4.5z" fill="#5a5a5a"/></svg>
<div class="b" style="left:1223px;top:233px;width:152px;height:19px;overflow:hidden">
<div class="t" style="left:11.00px;top:0.30px;font-size:15px;line-height:19px;color:#ffffff;font-weight:bold;">SUPERVISOR Agent</div>
</div>
<div class="b" style="left:1376px;top:234px;width:15px;height:15px;border:1px solid #a6a6a6;background:linear-gradient(#fdfdfd,#eeeeee)"></div>
<svg class="b" style="left:1380px;top:240px;" width="9" height="6" viewBox="0 0 9 6" fill="none"><path d="M0.5 0.5h8l-4 4.5z" fill="#5a5a5a"/></svg>
<div class="b" style="left:1394px;top:233px;width:15px;height:19px;overflow:hidden">
<div class="t" style="left:1.00px;top:0.30px;font-size:15px;line-height:19px;color:#ffffff;font-weight:bold;">isp</div>
</div>
<div class="b" style="left:1410px;top:234px;width:15px;height:15px;border:1px solid #a6a6a6;background:linear-gradient(#fdfdfd,#eeeeee)"></div>
<svg class="b" style="left:1414px;top:240px;" width="9" height="6" viewBox="0 0 9 6" fill="none"><path d="M0.5 0.5h8l-4 4.5z" fill="#5a5a5a"/></svg>
<div class="b" style="left:1428px;top:233px;width:155px;height:19px;overflow:hidden">
<div class="t" style="left:43.09px;top:0.30px;font-size:15px;line-height:19px;color:#ffffff;font-weight:bold;">Assigned to</div>
</div>
<div class="b" style="left:1584px;top:234px;width:15px;height:15px;border:1px solid #a6a6a6;background:linear-gradient(#fdfdfd,#eeeeee)"></div>
<svg class="b" style="left:1588px;top:240px;" width="9" height="6" viewBox="0 0 9 6" fill="none"><path d="M0.5 0.5h8l-4 4.5z" fill="#5a5a5a"/></svg>
<div class="b" style="left:1426px;top:251px;width:177px;height:23px;border:2px solid #217346;box-sizing:border-box"></div>
<div class="b" style="left:1599px;top:270px;width:5px;height:5px;background:#217346;border:1px solid #fff;box-sizing:content-box;margin:-1px"></div>
<div class="b" style="left:1603px;top:274px;width:20px;height:20px;background:#fff;border:1px solid #b0b0b0;box-sizing:border-box"></div>
<svg class="b" style="left:1603px;top:274px;" width="20" height="20" viewBox="0 0 20 20" fill="none"><path d="M17.6 7.8V6.7H2.6v7.1H10" stroke="#2a2a2a" stroke-width="1.3" fill="none" stroke-linejoin="round"/><path d="M13.6 9.3h4.6l-2.6 3.6h2.4l-6.3 6.9 2.2-4.8H11.5z" fill="#e8720c"/></svg>
<div class="b" style="left:1493px;top:256px;width:41px;height:716px;background:#fff;border:1px solid #000;box-sizing:border-box"></div>
<div class="t" style="left:1504.20px;top:392.53px;font-size:23px;line-height:29px;color:#111;">C</div>
<div class="t" style="left:1503.55px;top:425.03px;font-size:23px;line-height:29px;color:#111;">O</div>
<div class="t" style="left:1504.20px;top:457.53px;font-size:23px;line-height:29px;color:#111;">N</div>
<div class="t" style="left:1505.48px;top:490.03px;font-size:23px;line-height:29px;color:#111;">F</div>
<div class="t" style="left:1509.30px;top:522.53px;font-size:23px;line-height:29px;color:#111;">I</div>
<div class="t" style="left:1504.20px;top:555.03px;font-size:23px;line-height:29px;color:#111;">D</div>
<div class="t" style="left:1504.83px;top:587.53px;font-size:23px;line-height:29px;color:#111;">E</div>
<div class="t" style="left:1504.20px;top:620.03px;font-size:23px;line-height:29px;color:#111;">N</div>
<div class="t" style="left:1505.48px;top:652.53px;font-size:23px;line-height:29px;color:#111;">T</div>
<div class="t" style="left:1509.30px;top:685.03px;font-size:23px;line-height:29px;color:#111;">I</div>
<div class="t" style="left:1504.83px;top:717.53px;font-size:23px;line-height:29px;color:#111;">A</div>
<div class="t" style="left:1506.10px;top:750.03px;font-size:23px;line-height:29px;color:#111;">L</div>
<div class="b" style="left:0px;top:980px;width:1911px;height:31px;background:#f0f0f0"></div>
<svg class="b" style="left:27px;top:989px;" width="9" height="13" viewBox="0 0 9 13" fill="none"><path d="M7 1L2 6.5 7 12" stroke="#9a9a9a" stroke-width="1.1" fill="none"/></svg>
<svg class="b" style="left:60px;top:989px;" width="9" height="13" viewBox="0 0 9 13" fill="none"><path d="M2 1l5 5.5L2 12" stroke="#9a9a9a" stroke-width="1.1" fill="none"/></svg>
<div class="t" style="left:124.00px;top:987.15px;font-size:14px;line-height:18px;color:#333;transform:scaleX(0.9701);transform-origin:0 0;">TF30211 - BO QA only CA</div>
<div class="b" style="left:295px;top:988px;width:1px;height:15px;background:#c8c8c8"></div>
<div class="b" style="left:0px;top:980px;width:1898px;height:1px;background:#dedede"></div>
<div class="b" style="left:300px;top:980px;width:58px;height:28px;background:#fff;border:1px solid #dedede;border-top:none;border-radius:0 0 7px 7px;box-sizing:border-box"></div>
<div class="t" style="left:308.00px;top:984.65px;font-size:14px;line-height:18px;color:#1f1f1f;transform:scaleX(1.0186);transform-origin:0 0;-webkit-text-stroke:0.45px #1f1f1f;">Sorted</div>
<div class="b" style="left:308px;top:1003px;width:42px;height:2px;background:#107c41;border-radius:1px"></div>
<div class="b" style="left:362px;top:988px;width:1px;height:15px;background:#c8c8c8"></div>
<div class="t" style="left:375.00px;top:987.15px;font-size:14px;line-height:18px;color:#333;transform:scaleX(0.9468);transform-origin:0 0;">Sheet2</div>
<div class="b" style="left:430px;top:988px;width:1px;height:15px;background:#c8c8c8"></div>
<svg class="b" style="left:472px;top:989px;" width="13" height="13" viewBox="0 0 13 13" fill="none"><path d="M6.5 1v11M1 6.5h11" stroke="#777" stroke-width="1.1"/></svg>
<div class="b" style="left:1154px;top:991px;width:2px;height:2px;background:#9a9a9a;border-radius:1px"></div>
<div class="b" style="left:1154px;top:995px;width:2px;height:2px;background:#9a9a9a;border-radius:1px"></div>
<div class="b" style="left:1154px;top:999px;width:2px;height:2px;background:#9a9a9a;border-radius:1px"></div>
<div class="b" style="left:1172px;top:986px;width:728px;height:19px;background:#f5f5f5;border-radius:9px"></div>
<svg class="b" style="left:1176px;top:990px;" width="8" height="11" viewBox="0 0 8 11" fill="none"><path d="M7 0.5v10L0.5 5.5z" fill="#606060"/></svg>
<div class="b" style="left:1188px;top:991px;width:656px;height:9px;background:#6e6e6e;border-radius:5px"></div>
<svg class="b" style="left:1887px;top:990px;" width="8" height="11" viewBox="0 0 8 11" fill="none"><path d="M1 0.5v10l6.5-5z" fill="#606060"/></svg>
<div class="b" style="left:1898px;top:213px;width:13px;height:767px;background:#f0f0f0"></div>
<svg class="b" style="left:1903px;top:216px;" width="10" height="8" viewBox="0 0 10 8" fill="none"><path d="M0.5 7.5L5 1l4.5 6.5z" fill="#606060"/></svg>
<div class="b" style="left:1904px;top:231px;width:7px;height:16px;background:#6e6e6e;border-radius:4px 0 0 4px"></div>
<svg class="b" style="left:1903px;top:968px;" width="10" height="8" viewBox="0 0 10 8" fill="none"><path d="M0.5 0.5L5 7l4.5-6.5z" fill="#606060"/></svg>
</body></html>
